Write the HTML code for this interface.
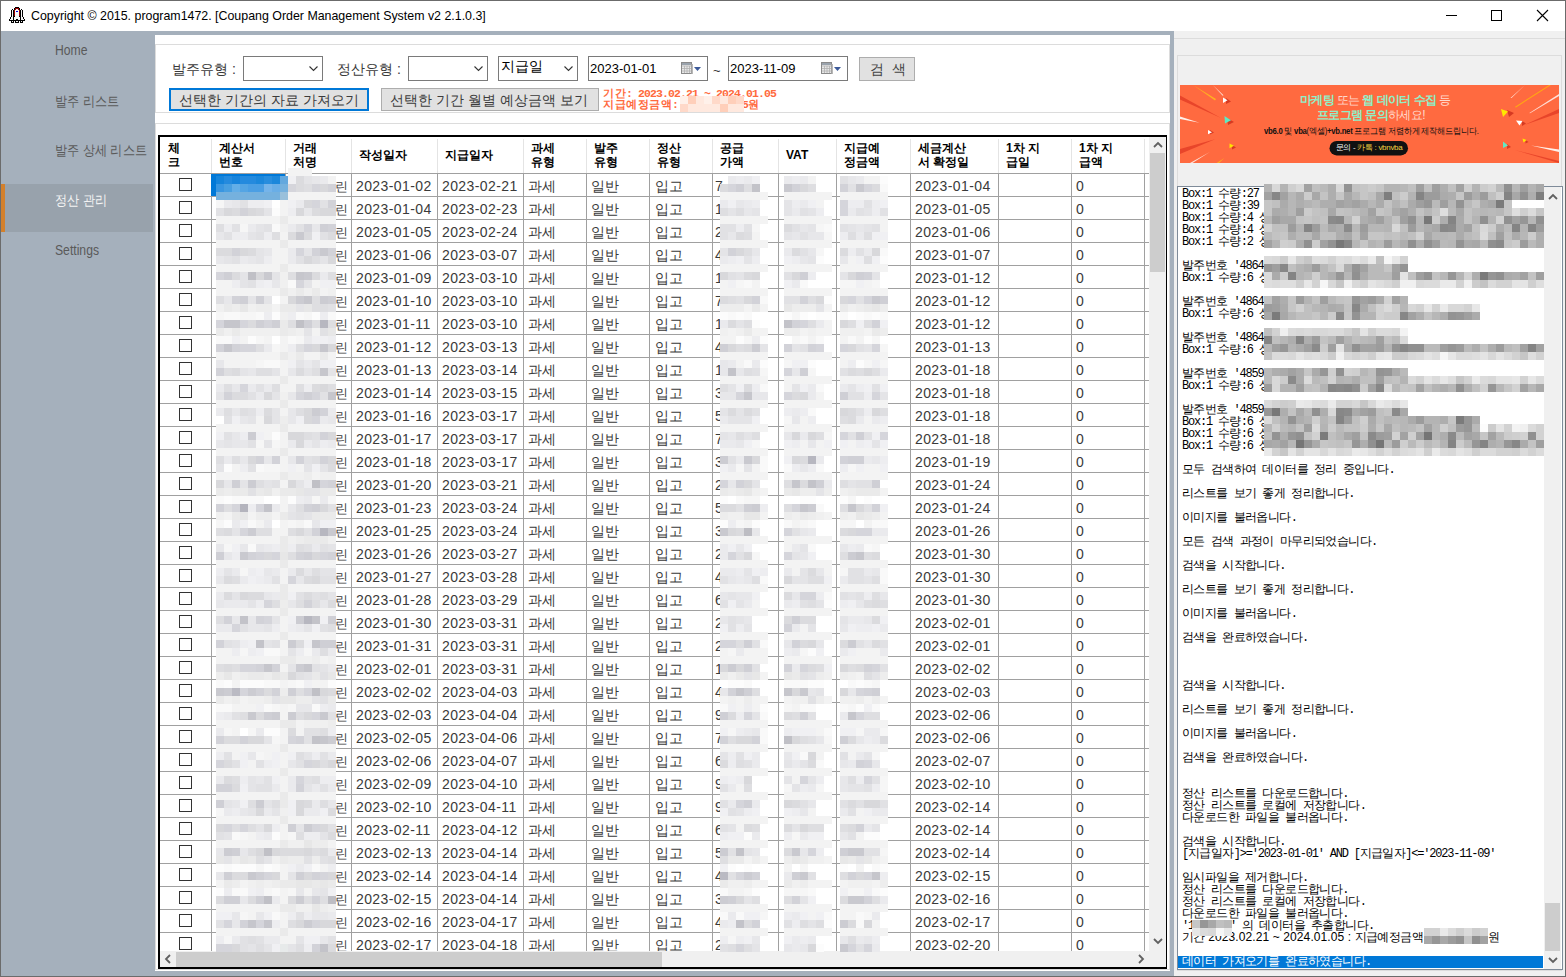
<!DOCTYPE html><html><head><meta charset="utf-8"><style>
*{margin:0;padding:0;box-sizing:border-box}
html,body{width:1566px;height:977px;overflow:hidden;background:#fff}
body{position:relative;font-family:"Liberation Sans",sans-serif;color:#000}
body div{position:absolute;white-space:nowrap}
.t{font-size:12.4px;line-height:14px}
.m{font-size:14px;line-height:16px;color:#5e5e5e;transform:scaleX(0.87);transform-origin:0 0}
.lb{font-size:14px;line-height:16px;color:#3a3a3a}
.hd{font-size:12px;line-height:14px;font-weight:bold;color:#000}
.c{font-size:14px;line-height:16px;color:#3a3a3a}
.g{font-family:"Liberation Mono",monospace;font-size:12px;line-height:12px;color:#000;letter-spacing:-1.2px}
.lg{font-family:"Liberation Sans",sans-serif;font-size:12px;line-height:12px;color:#000;letter-spacing:0.1px}
.lg b{font-weight:normal;letter-spacing:-0.6px}
.g b{font-weight:inherit;font-family:"Liberation Sans",sans-serif;font-size:12px;letter-spacing:-0.6px}
</style></head><body>
<div style="left:0px;top:0px;width:1566px;height:977px;background:#fff"></div>
<div style="left:1px;top:1px;width:1564px;height:30px;background:#fff"></div>
<div style="left:1px;top:31px;width:154px;height:945px;background:#a5b0bc"></div>
<div style="left:155px;top:31px;width:1019px;height:945px;background:#a5b0bc"></div>
<div style="left:155px;top:35px;width:1015px;height:936px;background:#fff"></div>
<div style="left:1174px;top:31px;width:391px;height:945px;background:#f0f0f0"></div>
<div style="left:0px;top:0px;width:1566px;height:1px;background:#6b6b6b"></div>
<div style="left:0px;top:0px;width:1px;height:977px;background:#6b6b6b"></div>
<div style="left:1565px;top:0px;width:1px;height:977px;background:#6b6b6b"></div>
<div style="left:0px;top:976px;width:1566px;height:1px;background:#6b6b6b"></div>
<svg style="position:absolute;left:9px;top:7px" width="16" height="16" shape-rendering="crispEdges"><rect x="6" y="0" width="1" height="1" fill="#000"/><rect x="7" y="0" width="1" height="1" fill="#000"/><rect x="8" y="0" width="1" height="1" fill="#000"/><rect x="9" y="0" width="1" height="1" fill="#000"/><rect x="5" y="1" width="1" height="1" fill="#000"/><rect x="6" y="1" width="1" height="1" fill="#9a0000"/><rect x="7" y="1" width="1" height="1" fill="#9a0000"/><rect x="8" y="1" width="1" height="1" fill="#9a0000"/><rect x="9" y="1" width="1" height="1" fill="#9a0000"/><rect x="10" y="1" width="1" height="1" fill="#000"/><rect x="3" y="2" width="1" height="1" fill="#000"/><rect x="5" y="2" width="1" height="1" fill="#000"/><rect x="6" y="2" width="1" height="1" fill="#9a0000"/><rect x="7" y="2" width="1" height="1" fill="#f4f4f4"/><rect x="8" y="2" width="1" height="1" fill="#f4f4f4"/><rect x="9" y="2" width="1" height="1" fill="#9a0000"/><rect x="10" y="2" width="1" height="1" fill="#000"/><rect x="12" y="2" width="1" height="1" fill="#000"/><rect x="2" y="3" width="1" height="1" fill="#000"/><rect x="3" y="3" width="1" height="1" fill="#f4f4f4"/><rect x="4" y="3" width="1" height="1" fill="#000"/><rect x="5" y="3" width="1" height="1" fill="#9a0000"/><rect x="6" y="3" width="1" height="1" fill="#f4f4f4"/><rect x="7" y="3" width="1" height="1" fill="#f4f4f4"/><rect x="8" y="3" width="1" height="1" fill="#f4f4f4"/><rect x="9" y="3" width="1" height="1" fill="#f4f4f4"/><rect x="10" y="3" width="1" height="1" fill="#9a0000"/><rect x="11" y="3" width="1" height="1" fill="#000"/><rect x="12" y="3" width="1" height="1" fill="#f4f4f4"/><rect x="13" y="3" width="1" height="1" fill="#000"/><rect x="2" y="4" width="1" height="1" fill="#000"/><rect x="3" y="4" width="1" height="1" fill="#f4f4f4"/><rect x="4" y="4" width="1" height="1" fill="#000"/><rect x="5" y="4" width="1" height="1" fill="#9a0000"/><rect x="6" y="4" width="1" height="1" fill="#f4f4f4"/><rect x="7" y="4" width="1" height="1" fill="#0000e0"/><rect x="8" y="4" width="1" height="1" fill="#0000e0"/><rect x="9" y="4" width="1" height="1" fill="#f4f4f4"/><rect x="10" y="4" width="1" height="1" fill="#9a0000"/><rect x="11" y="4" width="1" height="1" fill="#000"/><rect x="12" y="4" width="1" height="1" fill="#f4f4f4"/><rect x="13" y="4" width="1" height="1" fill="#000"/><rect x="2" y="5" width="1" height="1" fill="#000"/><rect x="3" y="5" width="1" height="1" fill="#f4f4f4"/><rect x="4" y="5" width="1" height="1" fill="#000"/><rect x="5" y="5" width="1" height="1" fill="#9a0000"/><rect x="6" y="5" width="1" height="1" fill="#f4f4f4"/><rect x="7" y="5" width="1" height="1" fill="#f4f4f4"/><rect x="8" y="5" width="1" height="1" fill="#f4f4f4"/><rect x="9" y="5" width="1" height="1" fill="#f4f4f4"/><rect x="10" y="5" width="1" height="1" fill="#9a0000"/><rect x="11" y="5" width="1" height="1" fill="#000"/><rect x="12" y="5" width="1" height="1" fill="#f4f4f4"/><rect x="13" y="5" width="1" height="1" fill="#000"/><rect x="2" y="6" width="1" height="1" fill="#000"/><rect x="3" y="6" width="1" height="1" fill="#f4f4f4"/><rect x="4" y="6" width="1" height="1" fill="#000"/><rect x="5" y="6" width="1" height="1" fill="#9a0000"/><rect x="6" y="6" width="1" height="1" fill="#f4f4f4"/><rect x="7" y="6" width="1" height="1" fill="#f4f4f4"/><rect x="8" y="6" width="1" height="1" fill="#f4f4f4"/><rect x="9" y="6" width="1" height="1" fill="#f4f4f4"/><rect x="10" y="6" width="1" height="1" fill="#9a0000"/><rect x="11" y="6" width="1" height="1" fill="#000"/><rect x="12" y="6" width="1" height="1" fill="#f4f4f4"/><rect x="13" y="6" width="1" height="1" fill="#000"/><rect x="2" y="7" width="1" height="1" fill="#000"/><rect x="3" y="7" width="1" height="1" fill="#f4f4f4"/><rect x="4" y="7" width="1" height="1" fill="#000"/><rect x="5" y="7" width="1" height="1" fill="#9a0000"/><rect x="6" y="7" width="1" height="1" fill="#f4f4f4"/><rect x="7" y="7" width="1" height="1" fill="#f4f4f4"/><rect x="8" y="7" width="1" height="1" fill="#f4f4f4"/><rect x="9" y="7" width="1" height="1" fill="#f4f4f4"/><rect x="10" y="7" width="1" height="1" fill="#9a0000"/><rect x="11" y="7" width="1" height="1" fill="#000"/><rect x="12" y="7" width="1" height="1" fill="#f4f4f4"/><rect x="13" y="7" width="1" height="1" fill="#000"/><rect x="2" y="8" width="1" height="1" fill="#000"/><rect x="3" y="8" width="1" height="1" fill="#f4f4f4"/><rect x="4" y="8" width="1" height="1" fill="#000"/><rect x="5" y="8" width="1" height="1" fill="#9a0000"/><rect x="6" y="8" width="1" height="1" fill="#f4f4f4"/><rect x="7" y="8" width="1" height="1" fill="#f4f4f4"/><rect x="8" y="8" width="1" height="1" fill="#f4f4f4"/><rect x="9" y="8" width="1" height="1" fill="#f4f4f4"/><rect x="10" y="8" width="1" height="1" fill="#9a0000"/><rect x="11" y="8" width="1" height="1" fill="#000"/><rect x="12" y="8" width="1" height="1" fill="#f4f4f4"/><rect x="13" y="8" width="1" height="1" fill="#000"/><rect x="2" y="9" width="1" height="1" fill="#000"/><rect x="3" y="9" width="1" height="1" fill="#f4f4f4"/><rect x="4" y="9" width="1" height="1" fill="#000"/><rect x="5" y="9" width="1" height="1" fill="#000"/><rect x="6" y="9" width="1" height="1" fill="#f4f4f4"/><rect x="7" y="9" width="1" height="1" fill="#f4f4f4"/><rect x="8" y="9" width="1" height="1" fill="#f4f4f4"/><rect x="9" y="9" width="1" height="1" fill="#f4f4f4"/><rect x="10" y="9" width="1" height="1" fill="#000"/><rect x="11" y="9" width="1" height="1" fill="#000"/><rect x="12" y="9" width="1" height="1" fill="#f4f4f4"/><rect x="13" y="9" width="1" height="1" fill="#000"/><rect x="1" y="10" width="1" height="1" fill="#000"/><rect x="2" y="10" width="1" height="1" fill="#f4f4f4"/><rect x="3" y="10" width="1" height="1" fill="#f4f4f4"/><rect x="4" y="10" width="1" height="1" fill="#000"/><rect x="5" y="10" width="1" height="1" fill="#f4f4f4"/><rect x="6" y="10" width="1" height="1" fill="#f4f4f4"/><rect x="7" y="10" width="1" height="1" fill="#f4f4f4"/><rect x="8" y="10" width="1" height="1" fill="#f4f4f4"/><rect x="9" y="10" width="1" height="1" fill="#f4f4f4"/><rect x="10" y="10" width="1" height="1" fill="#f4f4f4"/><rect x="11" y="10" width="1" height="1" fill="#000"/><rect x="12" y="10" width="1" height="1" fill="#f4f4f4"/><rect x="13" y="10" width="1" height="1" fill="#f4f4f4"/><rect x="14" y="10" width="1" height="1" fill="#000"/><rect x="1" y="11" width="1" height="1" fill="#000"/><rect x="2" y="11" width="1" height="1" fill="#f4f4f4"/><rect x="3" y="11" width="1" height="1" fill="#f4f4f4"/><rect x="4" y="11" width="1" height="1" fill="#000"/><rect x="5" y="11" width="1" height="1" fill="#f4f4f4"/><rect x="6" y="11" width="1" height="1" fill="#f4f4f4"/><rect x="7" y="11" width="1" height="1" fill="#f4f4f4"/><rect x="8" y="11" width="1" height="1" fill="#f4f4f4"/><rect x="9" y="11" width="1" height="1" fill="#f4f4f4"/><rect x="10" y="11" width="1" height="1" fill="#f4f4f4"/><rect x="11" y="11" width="1" height="1" fill="#000"/><rect x="12" y="11" width="1" height="1" fill="#f4f4f4"/><rect x="13" y="11" width="1" height="1" fill="#f4f4f4"/><rect x="14" y="11" width="1" height="1" fill="#000"/><rect x="0" y="12" width="1" height="1" fill="#000"/><rect x="1" y="12" width="1" height="1" fill="#f4f4f4"/><rect x="2" y="12" width="1" height="1" fill="#f4f4f4"/><rect x="3" y="12" width="1" height="1" fill="#f4f4f4"/><rect x="4" y="12" width="1" height="1" fill="#000"/><rect x="5" y="12" width="1" height="1" fill="#f4f4f4"/><rect x="6" y="12" width="1" height="1" fill="#f4f4f4"/><rect x="7" y="12" width="1" height="1" fill="#000"/><rect x="8" y="12" width="1" height="1" fill="#000"/><rect x="9" y="12" width="1" height="1" fill="#f4f4f4"/><rect x="10" y="12" width="1" height="1" fill="#f4f4f4"/><rect x="11" y="12" width="1" height="1" fill="#000"/><rect x="12" y="12" width="1" height="1" fill="#f4f4f4"/><rect x="13" y="12" width="1" height="1" fill="#f4f4f4"/><rect x="14" y="12" width="1" height="1" fill="#f4f4f4"/><rect x="15" y="12" width="1" height="1" fill="#000"/><rect x="0" y="13" width="1" height="1" fill="#000"/><rect x="1" y="13" width="1" height="1" fill="#000"/><rect x="2" y="13" width="1" height="1" fill="#000"/><rect x="3" y="13" width="1" height="1" fill="#000"/><rect x="4" y="13" width="1" height="1" fill="#000"/><rect x="5" y="13" width="1" height="1" fill="#000"/><rect x="6" y="13" width="1" height="1" fill="#000"/><rect x="7" y="13" width="1" height="1" fill="#000"/><rect x="8" y="13" width="1" height="1" fill="#000"/><rect x="9" y="13" width="1" height="1" fill="#000"/><rect x="10" y="13" width="1" height="1" fill="#000"/><rect x="11" y="13" width="1" height="1" fill="#000"/><rect x="12" y="13" width="1" height="1" fill="#000"/><rect x="13" y="13" width="1" height="1" fill="#000"/><rect x="14" y="13" width="1" height="1" fill="#000"/><rect x="15" y="13" width="1" height="1" fill="#000"/><rect x="2" y="14" width="1" height="1" fill="#000"/><rect x="3" y="14" width="1" height="1" fill="#f4f4f4"/><rect x="4" y="14" width="1" height="1" fill="#000"/><rect x="6" y="14" width="1" height="1" fill="#000"/><rect x="7" y="14" width="1" height="1" fill="#f4f4f4"/><rect x="8" y="14" width="1" height="1" fill="#f4f4f4"/><rect x="9" y="14" width="1" height="1" fill="#000"/><rect x="11" y="14" width="1" height="1" fill="#000"/><rect x="12" y="14" width="1" height="1" fill="#f4f4f4"/><rect x="13" y="14" width="1" height="1" fill="#000"/><rect x="2" y="15" width="1" height="1" fill="#000"/><rect x="3" y="15" width="1" height="1" fill="#000"/><rect x="4" y="15" width="1" height="1" fill="#000"/><rect x="6" y="15" width="1" height="1" fill="#000"/><rect x="7" y="15" width="1" height="1" fill="#000"/><rect x="8" y="15" width="1" height="1" fill="#000"/><rect x="9" y="15" width="1" height="1" fill="#000"/><rect x="11" y="15" width="1" height="1" fill="#000"/><rect x="12" y="15" width="1" height="1" fill="#000"/><rect x="13" y="15" width="1" height="1" fill="#000"/></svg>
<div class="t" style="left:31px;top:9px;color:#000">Copyright © 2015. program1472. [Coupang Order Management System v2 2.1.0.3]</div>
<div style="left:1446px;top:15px;width:11px;height:1px;background:#000"></div>
<div style="left:1491px;top:10px;width:11px;height:11px;border:1px solid #000"></div>
<svg style="position:absolute;left:1536px;top:9px" width="13" height="13" viewBox="0 0 13 13"><path d="M1 1L12 12M12 1L1 12" stroke="#000" stroke-width="1.1"/></svg>
<div style="left:1px;top:184px;width:152px;height:48px;background:#98a2ac"></div>
<div style="left:1px;top:184px;width:4px;height:48px;background:#d3802c"></div>
<div class="m" style="left:55px;top:42px;color:#5a5a5a">Home</div>
<div class="m" style="left:55px;top:93px;color:#5a5a5a">발주 리스트</div>
<div class="m" style="left:55px;top:142px;color:#5a5a5a">발주 상세 리스트</div>
<div class="m" style="left:55px;top:192px;color:#f4f4f4">정산 관리</div>
<div class="m" style="left:55px;top:242px;color:#5a5a5a">Settings</div>
<div style="left:155px;top:44px;width:1015px;height:1px;background:#dcdcdc"></div>
<div style="left:155px;top:44px;width:1px;height:68px;background:#dcdcdc"></div>
<div style="left:1169px;top:44px;width:1px;height:68px;background:#dcdcdc"></div>
<div style="left:155px;top:112px;width:1015px;height:1px;background:#dcdcdc"></div>
<div style="left:155px;top:123px;width:1015px;height:1px;background:#dcdcdc"></div>
<div style="left:155px;top:123px;width:1px;height:847px;background:#dcdcdc"></div>
<div style="left:1169px;top:123px;width:1px;height:847px;background:#dcdcdc"></div>
<div style="left:155px;top:969px;width:1015px;height:1px;background:#dcdcdc"></div>
<div class="lb" style="left:172px;top:61px;">발주유형 :</div>
<div class="lb" style="left:337px;top:61px;">정산유형 :</div>
<div style="left:243px;top:56px;width:80px;height:25px;border:1px solid #7a7a7a;background:#fff"></div>
<svg style="position:absolute;left:309px;top:66px" width="9" height="6" viewBox="0 0 9 6"><path d="M0.5 0.5L4.5 4.5L8.5 0.5" fill="none" stroke="#333" stroke-width="1.1"/></svg>
<div style="left:408px;top:56px;width:80px;height:25px;border:1px solid #7a7a7a;background:#fff"></div>
<svg style="position:absolute;left:474px;top:66px" width="9" height="6" viewBox="0 0 9 6"><path d="M0.5 0.5L4.5 4.5L8.5 0.5" fill="none" stroke="#333" stroke-width="1.1"/></svg>
<div style="left:498px;top:56px;width:80px;height:25px;border:1px solid #7a7a7a;background:#fff"></div>
<svg style="position:absolute;left:564px;top:66px" width="9" height="6" viewBox="0 0 9 6"><path d="M0.5 0.5L4.5 4.5L8.5 0.5" fill="none" stroke="#333" stroke-width="1.1"/></svg>
<div class="lb" style="left:501px;top:58px;color:#000">지급일</div>
<div style="left:588px;top:56px;width:120px;height:25px;border:1px solid #7a7a7a;background:#fff"></div>
<div class="lb" style="left:590px;top:61px;color:#000;font-size:13px">2023-01-01</div>
<svg style="position:absolute;left:681px;top:62px" width="21" height="13" viewBox="0 0 21 13">
<rect x="0.5" y="0.5" width="10" height="11" fill="#e8e8e8" stroke="#8a8a8a"/>
<path d="M1 4h9M1 6.5h9M1 9h9M3.5 4v7M6 4v7M8.5 4v7" stroke="#b0b0b0" stroke-width="0.8"/>
<rect x="1" y="1" width="9" height="2" fill="#9aa3ad"/>
<rect x="10.5" y="2" width="1.5" height="10" fill="#b8b8b8"/>
<path d="M13 5h7l-3.5 4z" fill="#3b5998"/></svg>
<div style="left:728px;top:56px;width:120px;height:25px;border:1px solid #7a7a7a;background:#fff"></div>
<div class="lb" style="left:730px;top:61px;color:#000;font-size:13px">2023-11-09</div>
<svg style="position:absolute;left:821px;top:62px" width="21" height="13" viewBox="0 0 21 13">
<rect x="0.5" y="0.5" width="10" height="11" fill="#e8e8e8" stroke="#8a8a8a"/>
<path d="M1 4h9M1 6.5h9M1 9h9M3.5 4v7M6 4v7M8.5 4v7" stroke="#b0b0b0" stroke-width="0.8"/>
<rect x="1" y="1" width="9" height="2" fill="#9aa3ad"/>
<rect x="10.5" y="2" width="1.5" height="10" fill="#b8b8b8"/>
<path d="M13 5h7l-3.5 4z" fill="#3b5998"/></svg>
<div class="lb" style="left:713px;top:63px;color:#333;font-size:13px">~</div>
<div style="left:859px;top:57px;width:56px;height:24px;border:1px solid #adadad;background:#e1e1e1"></div>
<div class="lb" style="left:870px;top:61px;color:#444">검&nbsp;&nbsp;색</div>
<div style="left:169px;top:88px;width:200px;height:23px;border:2px solid #0078d7;background:#e1e1e1"></div>
<div class="lb" style="left:179px;top:92px;color:#3c3c3c">선택한 기간의 자료 가져오기</div>
<div style="left:381px;top:88px;width:218px;height:23px;border:1px solid #adadad;background:#e1e1e1"></div>
<div class="lb" style="left:390px;top:92px;color:#3c3c3c">선택한 기간 월별 예상금액 보기</div>
<div class="g" style="left:603px;top:88px;color:#ff6a3d;font-weight:bold;line-height:10px;font-size:11.5px;letter-spacing:-0.9px"><b style="font-size:11px;letter-spacing:0.5px">기간</b>: 2023.02.21 ~ 2024.01.05</div>
<div class="g" style="left:603px;top:99px;color:#ff6a3d;font-weight:bold;line-height:10px;font-size:11.5px;letter-spacing:-0.9px"><b style="font-size:11px;letter-spacing:0.5px">지급예정금액</b>: <span style="display:inline-block;width:58px"></span>5<b style="font-size:11px">원</b></div>
<div style="left:680px;top:96px;width:8px;height:8px;background:#fff1ea"></div>
<div style="left:680px;top:104px;width:8px;height:8px;background:#ffd9c9"></div>
<div style="left:688px;top:96px;width:8px;height:8px;background:#ffcfba"></div>
<div style="left:688px;top:104px;width:8px;height:8px;background:#ffe9df"></div>
<div style="left:696px;top:96px;width:8px;height:8px;background:#ffe9df"></div>
<div style="left:696px;top:104px;width:8px;height:8px;background:#ffe9df"></div>
<div style="left:704px;top:96px;width:8px;height:8px;background:#fff1ea"></div>
<div style="left:704px;top:104px;width:8px;height:8px;background:#ffe9df"></div>
<div style="left:712px;top:96px;width:8px;height:8px;background:#ffd9c9"></div>
<div style="left:712px;top:104px;width:8px;height:8px;background:#ffe9df"></div>
<div style="left:720px;top:96px;width:8px;height:8px;background:#ffe9df"></div>
<div style="left:720px;top:104px;width:8px;height:8px;background:#ffcfba"></div>
<div style="left:728px;top:96px;width:8px;height:8px;background:#ffcfba"></div>
<div style="left:728px;top:104px;width:8px;height:8px;background:#ffe9df"></div>
<div style="left:736px;top:96px;width:8px;height:8px;background:#ffd9c9"></div>
<div style="left:736px;top:104px;width:8px;height:8px;background:#ffe9df"></div>
<div style="left:211px;top:139px;width:1px;height:36px;background:#e4e4e4"></div>
<div style="left:285px;top:139px;width:1px;height:36px;background:#e4e4e4"></div>
<div style="left:351px;top:139px;width:1px;height:36px;background:#e4e4e4"></div>
<div style="left:437px;top:139px;width:1px;height:36px;background:#e4e4e4"></div>
<div style="left:523px;top:139px;width:1px;height:36px;background:#e4e4e4"></div>
<div style="left:586px;top:139px;width:1px;height:36px;background:#e4e4e4"></div>
<div style="left:649px;top:139px;width:1px;height:36px;background:#e4e4e4"></div>
<div style="left:712px;top:139px;width:1px;height:36px;background:#e4e4e4"></div>
<div style="left:778px;top:139px;width:1px;height:36px;background:#e4e4e4"></div>
<div style="left:836px;top:139px;width:1px;height:36px;background:#e4e4e4"></div>
<div style="left:910px;top:139px;width:1px;height:36px;background:#e4e4e4"></div>
<div style="left:998px;top:139px;width:1px;height:36px;background:#e4e4e4"></div>
<div style="left:1071px;top:139px;width:1px;height:36px;background:#e4e4e4"></div>
<div style="left:1144px;top:139px;width:1px;height:36px;background:#e4e4e4"></div>
<div style="left:160px;top:173px;width:989px;height:1px;background:#a0a0a0"></div>
<div class="hd" style="left:168px;top:141px;">체<br>크</div>
<div class="hd" style="left:219px;top:141px;">계산서<br>번호</div>
<div class="hd" style="left:293px;top:141px;">거래<br>처명</div>
<div class="hd" style="left:359px;top:148px;">작성일자</div>
<div class="hd" style="left:445px;top:148px;">지급일자</div>
<div class="hd" style="left:531px;top:141px;">과세<br>유형</div>
<div class="hd" style="left:594px;top:141px;">발주<br>유형</div>
<div class="hd" style="left:657px;top:141px;">정산<br>유형</div>
<div class="hd" style="left:720px;top:141px;">공급<br>가액</div>
<div class="hd" style="left:786px;top:148px;">VAT</div>
<div class="hd" style="left:844px;top:141px;">지급예<br>정금액</div>
<div class="hd" style="left:918px;top:141px;">세금계산<br>서 확정일</div>
<div class="hd" style="left:1006px;top:141px;">1차 지<br>급일</div>
<div class="hd" style="left:1079px;top:141px;">1차 지<br>급액</div>
<div style="left:160px;top:174px;width:989px;height:777px;overflow:hidden">
<div style="left:0;top:22px;width:989px;height:1px;background:#a0a0a0"></div>
<div style="left:19px;top:4px;width:13px;height:13px;border:1px solid #333;background:#fff"></div>
<div class="c" style="left:196px;top:4px;letter-spacing:0.4px">2023-01-02</div>
<div class="c" style="left:282px;top:4px;letter-spacing:0.4px">2023-02-21</div>
<div class="c" style="left:755px;top:4px;letter-spacing:0.4px">2023-01-04</div>
<div class="c" style="left:175px;top:5px;font-size:13px">린</div>
<div class="c" style="left:368px;top:4px">과세</div>
<div class="c" style="left:431px;top:4px">일반</div>
<div class="c" style="left:495px;top:4px">입고</div>
<div class="c" style="left:916px;top:4px">0</div>
<div class="c" style="left:555px;top:4px">7</div>
<div style="left:0;top:45px;width:989px;height:1px;background:#a0a0a0"></div>
<div style="left:19px;top:27px;width:13px;height:13px;border:1px solid #333;background:#fff"></div>
<div class="c" style="left:196px;top:27px;letter-spacing:0.4px">2023-01-04</div>
<div class="c" style="left:282px;top:27px;letter-spacing:0.4px">2023-02-23</div>
<div class="c" style="left:755px;top:27px;letter-spacing:0.4px">2023-01-05</div>
<div class="c" style="left:175px;top:28px;font-size:13px">린</div>
<div class="c" style="left:368px;top:27px">과세</div>
<div class="c" style="left:431px;top:27px">일반</div>
<div class="c" style="left:495px;top:27px">입고</div>
<div class="c" style="left:916px;top:27px">0</div>
<div class="c" style="left:555px;top:27px">1</div>
<div style="left:0;top:68px;width:989px;height:1px;background:#a0a0a0"></div>
<div style="left:19px;top:50px;width:13px;height:13px;border:1px solid #333;background:#fff"></div>
<div class="c" style="left:196px;top:50px;letter-spacing:0.4px">2023-01-05</div>
<div class="c" style="left:282px;top:50px;letter-spacing:0.4px">2023-02-24</div>
<div class="c" style="left:755px;top:50px;letter-spacing:0.4px">2023-01-06</div>
<div class="c" style="left:175px;top:51px;font-size:13px">린</div>
<div class="c" style="left:368px;top:50px">과세</div>
<div class="c" style="left:431px;top:50px">일반</div>
<div class="c" style="left:495px;top:50px">입고</div>
<div class="c" style="left:916px;top:50px">0</div>
<div class="c" style="left:555px;top:50px">2</div>
<div style="left:0;top:91px;width:989px;height:1px;background:#a0a0a0"></div>
<div style="left:19px;top:73px;width:13px;height:13px;border:1px solid #333;background:#fff"></div>
<div class="c" style="left:196px;top:73px;letter-spacing:0.4px">2023-01-06</div>
<div class="c" style="left:282px;top:73px;letter-spacing:0.4px">2023-03-07</div>
<div class="c" style="left:755px;top:73px;letter-spacing:0.4px">2023-01-07</div>
<div class="c" style="left:175px;top:74px;font-size:13px">린</div>
<div class="c" style="left:368px;top:73px">과세</div>
<div class="c" style="left:431px;top:73px">일반</div>
<div class="c" style="left:495px;top:73px">입고</div>
<div class="c" style="left:916px;top:73px">0</div>
<div class="c" style="left:555px;top:73px">4</div>
<div style="left:0;top:114px;width:989px;height:1px;background:#a0a0a0"></div>
<div style="left:19px;top:96px;width:13px;height:13px;border:1px solid #333;background:#fff"></div>
<div class="c" style="left:196px;top:96px;letter-spacing:0.4px">2023-01-09</div>
<div class="c" style="left:282px;top:96px;letter-spacing:0.4px">2023-03-10</div>
<div class="c" style="left:755px;top:96px;letter-spacing:0.4px">2023-01-12</div>
<div class="c" style="left:175px;top:97px;font-size:13px">린</div>
<div class="c" style="left:368px;top:96px">과세</div>
<div class="c" style="left:431px;top:96px">일반</div>
<div class="c" style="left:495px;top:96px">입고</div>
<div class="c" style="left:916px;top:96px">0</div>
<div class="c" style="left:555px;top:96px">1</div>
<div style="left:0;top:137px;width:989px;height:1px;background:#a0a0a0"></div>
<div style="left:19px;top:119px;width:13px;height:13px;border:1px solid #333;background:#fff"></div>
<div class="c" style="left:196px;top:119px;letter-spacing:0.4px">2023-01-10</div>
<div class="c" style="left:282px;top:119px;letter-spacing:0.4px">2023-03-10</div>
<div class="c" style="left:755px;top:119px;letter-spacing:0.4px">2023-01-12</div>
<div class="c" style="left:175px;top:120px;font-size:13px">린</div>
<div class="c" style="left:368px;top:119px">과세</div>
<div class="c" style="left:431px;top:119px">일반</div>
<div class="c" style="left:495px;top:119px">입고</div>
<div class="c" style="left:916px;top:119px">0</div>
<div class="c" style="left:555px;top:119px">7</div>
<div style="left:0;top:160px;width:989px;height:1px;background:#a0a0a0"></div>
<div style="left:19px;top:142px;width:13px;height:13px;border:1px solid #333;background:#fff"></div>
<div class="c" style="left:196px;top:142px;letter-spacing:0.4px">2023-01-11</div>
<div class="c" style="left:282px;top:142px;letter-spacing:0.4px">2023-03-10</div>
<div class="c" style="left:755px;top:142px;letter-spacing:0.4px">2023-01-12</div>
<div class="c" style="left:175px;top:143px;font-size:13px">린</div>
<div class="c" style="left:368px;top:142px">과세</div>
<div class="c" style="left:431px;top:142px">일반</div>
<div class="c" style="left:495px;top:142px">입고</div>
<div class="c" style="left:916px;top:142px">0</div>
<div class="c" style="left:555px;top:142px">1</div>
<div style="left:0;top:183px;width:989px;height:1px;background:#a0a0a0"></div>
<div style="left:19px;top:165px;width:13px;height:13px;border:1px solid #333;background:#fff"></div>
<div class="c" style="left:196px;top:165px;letter-spacing:0.4px">2023-01-12</div>
<div class="c" style="left:282px;top:165px;letter-spacing:0.4px">2023-03-13</div>
<div class="c" style="left:755px;top:165px;letter-spacing:0.4px">2023-01-13</div>
<div class="c" style="left:175px;top:166px;font-size:13px">린</div>
<div class="c" style="left:368px;top:165px">과세</div>
<div class="c" style="left:431px;top:165px">일반</div>
<div class="c" style="left:495px;top:165px">입고</div>
<div class="c" style="left:916px;top:165px">0</div>
<div class="c" style="left:555px;top:165px">4</div>
<div style="left:0;top:206px;width:989px;height:1px;background:#a0a0a0"></div>
<div style="left:19px;top:188px;width:13px;height:13px;border:1px solid #333;background:#fff"></div>
<div class="c" style="left:196px;top:188px;letter-spacing:0.4px">2023-01-13</div>
<div class="c" style="left:282px;top:188px;letter-spacing:0.4px">2023-03-14</div>
<div class="c" style="left:755px;top:188px;letter-spacing:0.4px">2023-01-18</div>
<div class="c" style="left:175px;top:189px;font-size:13px">린</div>
<div class="c" style="left:368px;top:188px">과세</div>
<div class="c" style="left:431px;top:188px">일반</div>
<div class="c" style="left:495px;top:188px">입고</div>
<div class="c" style="left:916px;top:188px">0</div>
<div class="c" style="left:555px;top:188px">1</div>
<div style="left:0;top:229px;width:989px;height:1px;background:#a0a0a0"></div>
<div style="left:19px;top:211px;width:13px;height:13px;border:1px solid #333;background:#fff"></div>
<div class="c" style="left:196px;top:211px;letter-spacing:0.4px">2023-01-14</div>
<div class="c" style="left:282px;top:211px;letter-spacing:0.4px">2023-03-15</div>
<div class="c" style="left:755px;top:211px;letter-spacing:0.4px">2023-01-18</div>
<div class="c" style="left:175px;top:212px;font-size:13px">린</div>
<div class="c" style="left:368px;top:211px">과세</div>
<div class="c" style="left:431px;top:211px">일반</div>
<div class="c" style="left:495px;top:211px">입고</div>
<div class="c" style="left:916px;top:211px">0</div>
<div class="c" style="left:555px;top:211px">3</div>
<div style="left:0;top:252px;width:989px;height:1px;background:#a0a0a0"></div>
<div style="left:19px;top:234px;width:13px;height:13px;border:1px solid #333;background:#fff"></div>
<div class="c" style="left:196px;top:234px;letter-spacing:0.4px">2023-01-16</div>
<div class="c" style="left:282px;top:234px;letter-spacing:0.4px">2023-03-17</div>
<div class="c" style="left:755px;top:234px;letter-spacing:0.4px">2023-01-18</div>
<div class="c" style="left:175px;top:235px;font-size:13px">린</div>
<div class="c" style="left:368px;top:234px">과세</div>
<div class="c" style="left:431px;top:234px">일반</div>
<div class="c" style="left:495px;top:234px">입고</div>
<div class="c" style="left:916px;top:234px">0</div>
<div class="c" style="left:555px;top:234px">5</div>
<div style="left:0;top:275px;width:989px;height:1px;background:#a0a0a0"></div>
<div style="left:19px;top:257px;width:13px;height:13px;border:1px solid #333;background:#fff"></div>
<div class="c" style="left:196px;top:257px;letter-spacing:0.4px">2023-01-17</div>
<div class="c" style="left:282px;top:257px;letter-spacing:0.4px">2023-03-17</div>
<div class="c" style="left:755px;top:257px;letter-spacing:0.4px">2023-01-18</div>
<div class="c" style="left:175px;top:258px;font-size:13px">린</div>
<div class="c" style="left:368px;top:257px">과세</div>
<div class="c" style="left:431px;top:257px">일반</div>
<div class="c" style="left:495px;top:257px">입고</div>
<div class="c" style="left:916px;top:257px">0</div>
<div class="c" style="left:555px;top:257px">7</div>
<div style="left:0;top:298px;width:989px;height:1px;background:#a0a0a0"></div>
<div style="left:19px;top:280px;width:13px;height:13px;border:1px solid #333;background:#fff"></div>
<div class="c" style="left:196px;top:280px;letter-spacing:0.4px">2023-01-18</div>
<div class="c" style="left:282px;top:280px;letter-spacing:0.4px">2023-03-17</div>
<div class="c" style="left:755px;top:280px;letter-spacing:0.4px">2023-01-19</div>
<div class="c" style="left:175px;top:281px;font-size:13px">린</div>
<div class="c" style="left:368px;top:280px">과세</div>
<div class="c" style="left:431px;top:280px">일반</div>
<div class="c" style="left:495px;top:280px">입고</div>
<div class="c" style="left:916px;top:280px">0</div>
<div class="c" style="left:555px;top:280px">3</div>
<div style="left:0;top:321px;width:989px;height:1px;background:#a0a0a0"></div>
<div style="left:19px;top:303px;width:13px;height:13px;border:1px solid #333;background:#fff"></div>
<div class="c" style="left:196px;top:303px;letter-spacing:0.4px">2023-01-20</div>
<div class="c" style="left:282px;top:303px;letter-spacing:0.4px">2023-03-21</div>
<div class="c" style="left:755px;top:303px;letter-spacing:0.4px">2023-01-24</div>
<div class="c" style="left:175px;top:304px;font-size:13px">린</div>
<div class="c" style="left:368px;top:303px">과세</div>
<div class="c" style="left:431px;top:303px">일반</div>
<div class="c" style="left:495px;top:303px">입고</div>
<div class="c" style="left:916px;top:303px">0</div>
<div class="c" style="left:555px;top:303px">2</div>
<div style="left:0;top:344px;width:989px;height:1px;background:#a0a0a0"></div>
<div style="left:19px;top:326px;width:13px;height:13px;border:1px solid #333;background:#fff"></div>
<div class="c" style="left:196px;top:326px;letter-spacing:0.4px">2023-01-23</div>
<div class="c" style="left:282px;top:326px;letter-spacing:0.4px">2023-03-24</div>
<div class="c" style="left:755px;top:326px;letter-spacing:0.4px">2023-01-24</div>
<div class="c" style="left:175px;top:327px;font-size:13px">린</div>
<div class="c" style="left:368px;top:326px">과세</div>
<div class="c" style="left:431px;top:326px">일반</div>
<div class="c" style="left:495px;top:326px">입고</div>
<div class="c" style="left:916px;top:326px">0</div>
<div class="c" style="left:555px;top:326px">5</div>
<div style="left:0;top:367px;width:989px;height:1px;background:#a0a0a0"></div>
<div style="left:19px;top:349px;width:13px;height:13px;border:1px solid #333;background:#fff"></div>
<div class="c" style="left:196px;top:349px;letter-spacing:0.4px">2023-01-25</div>
<div class="c" style="left:282px;top:349px;letter-spacing:0.4px">2023-03-24</div>
<div class="c" style="left:755px;top:349px;letter-spacing:0.4px">2023-01-26</div>
<div class="c" style="left:175px;top:350px;font-size:13px">린</div>
<div class="c" style="left:368px;top:349px">과세</div>
<div class="c" style="left:431px;top:349px">일반</div>
<div class="c" style="left:495px;top:349px">입고</div>
<div class="c" style="left:916px;top:349px">0</div>
<div class="c" style="left:555px;top:349px">3</div>
<div style="left:0;top:390px;width:989px;height:1px;background:#a0a0a0"></div>
<div style="left:19px;top:372px;width:13px;height:13px;border:1px solid #333;background:#fff"></div>
<div class="c" style="left:196px;top:372px;letter-spacing:0.4px">2023-01-26</div>
<div class="c" style="left:282px;top:372px;letter-spacing:0.4px">2023-03-27</div>
<div class="c" style="left:755px;top:372px;letter-spacing:0.4px">2023-01-30</div>
<div class="c" style="left:175px;top:373px;font-size:13px">린</div>
<div class="c" style="left:368px;top:372px">과세</div>
<div class="c" style="left:431px;top:372px">일반</div>
<div class="c" style="left:495px;top:372px">입고</div>
<div class="c" style="left:916px;top:372px">0</div>
<div class="c" style="left:555px;top:372px">2</div>
<div style="left:0;top:413px;width:989px;height:1px;background:#a0a0a0"></div>
<div style="left:19px;top:395px;width:13px;height:13px;border:1px solid #333;background:#fff"></div>
<div class="c" style="left:196px;top:395px;letter-spacing:0.4px">2023-01-27</div>
<div class="c" style="left:282px;top:395px;letter-spacing:0.4px">2023-03-28</div>
<div class="c" style="left:755px;top:395px;letter-spacing:0.4px">2023-01-30</div>
<div class="c" style="left:175px;top:396px;font-size:13px">린</div>
<div class="c" style="left:368px;top:395px">과세</div>
<div class="c" style="left:431px;top:395px">일반</div>
<div class="c" style="left:495px;top:395px">입고</div>
<div class="c" style="left:916px;top:395px">0</div>
<div class="c" style="left:555px;top:395px">4</div>
<div style="left:0;top:436px;width:989px;height:1px;background:#a0a0a0"></div>
<div style="left:19px;top:418px;width:13px;height:13px;border:1px solid #333;background:#fff"></div>
<div class="c" style="left:196px;top:418px;letter-spacing:0.4px">2023-01-28</div>
<div class="c" style="left:282px;top:418px;letter-spacing:0.4px">2023-03-29</div>
<div class="c" style="left:755px;top:418px;letter-spacing:0.4px">2023-01-30</div>
<div class="c" style="left:175px;top:419px;font-size:13px">린</div>
<div class="c" style="left:368px;top:418px">과세</div>
<div class="c" style="left:431px;top:418px">일반</div>
<div class="c" style="left:495px;top:418px">입고</div>
<div class="c" style="left:916px;top:418px">0</div>
<div class="c" style="left:555px;top:418px">6</div>
<div style="left:0;top:459px;width:989px;height:1px;background:#a0a0a0"></div>
<div style="left:19px;top:441px;width:13px;height:13px;border:1px solid #333;background:#fff"></div>
<div class="c" style="left:196px;top:441px;letter-spacing:0.4px">2023-01-30</div>
<div class="c" style="left:282px;top:441px;letter-spacing:0.4px">2023-03-31</div>
<div class="c" style="left:755px;top:441px;letter-spacing:0.4px">2023-02-01</div>
<div class="c" style="left:175px;top:442px;font-size:13px">린</div>
<div class="c" style="left:368px;top:441px">과세</div>
<div class="c" style="left:431px;top:441px">일반</div>
<div class="c" style="left:495px;top:441px">입고</div>
<div class="c" style="left:916px;top:441px">0</div>
<div class="c" style="left:555px;top:441px">2</div>
<div style="left:0;top:482px;width:989px;height:1px;background:#a0a0a0"></div>
<div style="left:19px;top:464px;width:13px;height:13px;border:1px solid #333;background:#fff"></div>
<div class="c" style="left:196px;top:464px;letter-spacing:0.4px">2023-01-31</div>
<div class="c" style="left:282px;top:464px;letter-spacing:0.4px">2023-03-31</div>
<div class="c" style="left:755px;top:464px;letter-spacing:0.4px">2023-02-01</div>
<div class="c" style="left:175px;top:465px;font-size:13px">린</div>
<div class="c" style="left:368px;top:464px">과세</div>
<div class="c" style="left:431px;top:464px">일반</div>
<div class="c" style="left:495px;top:464px">입고</div>
<div class="c" style="left:916px;top:464px">0</div>
<div class="c" style="left:555px;top:464px">2</div>
<div style="left:0;top:505px;width:989px;height:1px;background:#a0a0a0"></div>
<div style="left:19px;top:487px;width:13px;height:13px;border:1px solid #333;background:#fff"></div>
<div class="c" style="left:196px;top:487px;letter-spacing:0.4px">2023-02-01</div>
<div class="c" style="left:282px;top:487px;letter-spacing:0.4px">2023-03-31</div>
<div class="c" style="left:755px;top:487px;letter-spacing:0.4px">2023-02-02</div>
<div class="c" style="left:175px;top:488px;font-size:13px">린</div>
<div class="c" style="left:368px;top:487px">과세</div>
<div class="c" style="left:431px;top:487px">일반</div>
<div class="c" style="left:495px;top:487px">입고</div>
<div class="c" style="left:916px;top:487px">0</div>
<div class="c" style="left:555px;top:487px">1</div>
<div style="left:0;top:528px;width:989px;height:1px;background:#a0a0a0"></div>
<div style="left:19px;top:510px;width:13px;height:13px;border:1px solid #333;background:#fff"></div>
<div class="c" style="left:196px;top:510px;letter-spacing:0.4px">2023-02-02</div>
<div class="c" style="left:282px;top:510px;letter-spacing:0.4px">2023-04-03</div>
<div class="c" style="left:755px;top:510px;letter-spacing:0.4px">2023-02-03</div>
<div class="c" style="left:175px;top:511px;font-size:13px">린</div>
<div class="c" style="left:368px;top:510px">과세</div>
<div class="c" style="left:431px;top:510px">일반</div>
<div class="c" style="left:495px;top:510px">입고</div>
<div class="c" style="left:916px;top:510px">0</div>
<div class="c" style="left:555px;top:510px">4</div>
<div style="left:0;top:551px;width:989px;height:1px;background:#a0a0a0"></div>
<div style="left:19px;top:533px;width:13px;height:13px;border:1px solid #333;background:#fff"></div>
<div class="c" style="left:196px;top:533px;letter-spacing:0.4px">2023-02-03</div>
<div class="c" style="left:282px;top:533px;letter-spacing:0.4px">2023-04-04</div>
<div class="c" style="left:755px;top:533px;letter-spacing:0.4px">2023-02-06</div>
<div class="c" style="left:175px;top:534px;font-size:13px">린</div>
<div class="c" style="left:368px;top:533px">과세</div>
<div class="c" style="left:431px;top:533px">일반</div>
<div class="c" style="left:495px;top:533px">입고</div>
<div class="c" style="left:916px;top:533px">0</div>
<div class="c" style="left:555px;top:533px">9</div>
<div style="left:0;top:574px;width:989px;height:1px;background:#a0a0a0"></div>
<div style="left:19px;top:556px;width:13px;height:13px;border:1px solid #333;background:#fff"></div>
<div class="c" style="left:196px;top:556px;letter-spacing:0.4px">2023-02-05</div>
<div class="c" style="left:282px;top:556px;letter-spacing:0.4px">2023-04-06</div>
<div class="c" style="left:755px;top:556px;letter-spacing:0.4px">2023-02-06</div>
<div class="c" style="left:175px;top:557px;font-size:13px">린</div>
<div class="c" style="left:368px;top:556px">과세</div>
<div class="c" style="left:431px;top:556px">일반</div>
<div class="c" style="left:495px;top:556px">입고</div>
<div class="c" style="left:916px;top:556px">0</div>
<div class="c" style="left:555px;top:556px">7</div>
<div style="left:0;top:597px;width:989px;height:1px;background:#a0a0a0"></div>
<div style="left:19px;top:579px;width:13px;height:13px;border:1px solid #333;background:#fff"></div>
<div class="c" style="left:196px;top:579px;letter-spacing:0.4px">2023-02-06</div>
<div class="c" style="left:282px;top:579px;letter-spacing:0.4px">2023-04-07</div>
<div class="c" style="left:755px;top:579px;letter-spacing:0.4px">2023-02-07</div>
<div class="c" style="left:175px;top:580px;font-size:13px">린</div>
<div class="c" style="left:368px;top:579px">과세</div>
<div class="c" style="left:431px;top:579px">일반</div>
<div class="c" style="left:495px;top:579px">입고</div>
<div class="c" style="left:916px;top:579px">0</div>
<div class="c" style="left:555px;top:579px">6</div>
<div style="left:0;top:620px;width:989px;height:1px;background:#a0a0a0"></div>
<div style="left:19px;top:602px;width:13px;height:13px;border:1px solid #333;background:#fff"></div>
<div class="c" style="left:196px;top:602px;letter-spacing:0.4px">2023-02-09</div>
<div class="c" style="left:282px;top:602px;letter-spacing:0.4px">2023-04-10</div>
<div class="c" style="left:755px;top:602px;letter-spacing:0.4px">2023-02-10</div>
<div class="c" style="left:175px;top:603px;font-size:13px">린</div>
<div class="c" style="left:368px;top:602px">과세</div>
<div class="c" style="left:431px;top:602px">일반</div>
<div class="c" style="left:495px;top:602px">입고</div>
<div class="c" style="left:916px;top:602px">0</div>
<div class="c" style="left:555px;top:602px">9</div>
<div style="left:0;top:643px;width:989px;height:1px;background:#a0a0a0"></div>
<div style="left:19px;top:625px;width:13px;height:13px;border:1px solid #333;background:#fff"></div>
<div class="c" style="left:196px;top:625px;letter-spacing:0.4px">2023-02-10</div>
<div class="c" style="left:282px;top:625px;letter-spacing:0.4px">2023-04-11</div>
<div class="c" style="left:755px;top:625px;letter-spacing:0.4px">2023-02-14</div>
<div class="c" style="left:175px;top:626px;font-size:13px">린</div>
<div class="c" style="left:368px;top:625px">과세</div>
<div class="c" style="left:431px;top:625px">일반</div>
<div class="c" style="left:495px;top:625px">입고</div>
<div class="c" style="left:916px;top:625px">0</div>
<div class="c" style="left:555px;top:625px">9</div>
<div style="left:0;top:666px;width:989px;height:1px;background:#a0a0a0"></div>
<div style="left:19px;top:648px;width:13px;height:13px;border:1px solid #333;background:#fff"></div>
<div class="c" style="left:196px;top:648px;letter-spacing:0.4px">2023-02-11</div>
<div class="c" style="left:282px;top:648px;letter-spacing:0.4px">2023-04-12</div>
<div class="c" style="left:755px;top:648px;letter-spacing:0.4px">2023-02-14</div>
<div class="c" style="left:175px;top:649px;font-size:13px">린</div>
<div class="c" style="left:368px;top:648px">과세</div>
<div class="c" style="left:431px;top:648px">일반</div>
<div class="c" style="left:495px;top:648px">입고</div>
<div class="c" style="left:916px;top:648px">0</div>
<div class="c" style="left:555px;top:648px">6</div>
<div style="left:0;top:689px;width:989px;height:1px;background:#a0a0a0"></div>
<div style="left:19px;top:671px;width:13px;height:13px;border:1px solid #333;background:#fff"></div>
<div class="c" style="left:196px;top:671px;letter-spacing:0.4px">2023-02-13</div>
<div class="c" style="left:282px;top:671px;letter-spacing:0.4px">2023-04-14</div>
<div class="c" style="left:755px;top:671px;letter-spacing:0.4px">2023-02-14</div>
<div class="c" style="left:175px;top:672px;font-size:13px">린</div>
<div class="c" style="left:368px;top:671px">과세</div>
<div class="c" style="left:431px;top:671px">일반</div>
<div class="c" style="left:495px;top:671px">입고</div>
<div class="c" style="left:916px;top:671px">0</div>
<div class="c" style="left:555px;top:671px">5</div>
<div style="left:0;top:712px;width:989px;height:1px;background:#a0a0a0"></div>
<div style="left:19px;top:694px;width:13px;height:13px;border:1px solid #333;background:#fff"></div>
<div class="c" style="left:196px;top:694px;letter-spacing:0.4px">2023-02-14</div>
<div class="c" style="left:282px;top:694px;letter-spacing:0.4px">2023-04-14</div>
<div class="c" style="left:755px;top:694px;letter-spacing:0.4px">2023-02-15</div>
<div class="c" style="left:175px;top:695px;font-size:13px">린</div>
<div class="c" style="left:368px;top:694px">과세</div>
<div class="c" style="left:431px;top:694px">일반</div>
<div class="c" style="left:495px;top:694px">입고</div>
<div class="c" style="left:916px;top:694px">0</div>
<div class="c" style="left:555px;top:694px">4</div>
<div style="left:0;top:735px;width:989px;height:1px;background:#a0a0a0"></div>
<div style="left:19px;top:717px;width:13px;height:13px;border:1px solid #333;background:#fff"></div>
<div class="c" style="left:196px;top:717px;letter-spacing:0.4px">2023-02-15</div>
<div class="c" style="left:282px;top:717px;letter-spacing:0.4px">2023-04-14</div>
<div class="c" style="left:755px;top:717px;letter-spacing:0.4px">2023-02-16</div>
<div class="c" style="left:175px;top:718px;font-size:13px">린</div>
<div class="c" style="left:368px;top:717px">과세</div>
<div class="c" style="left:431px;top:717px">일반</div>
<div class="c" style="left:495px;top:717px">입고</div>
<div class="c" style="left:916px;top:717px">0</div>
<div class="c" style="left:555px;top:717px">3</div>
<div style="left:0;top:758px;width:989px;height:1px;background:#a0a0a0"></div>
<div style="left:19px;top:740px;width:13px;height:13px;border:1px solid #333;background:#fff"></div>
<div class="c" style="left:196px;top:740px;letter-spacing:0.4px">2023-02-16</div>
<div class="c" style="left:282px;top:740px;letter-spacing:0.4px">2023-04-17</div>
<div class="c" style="left:755px;top:740px;letter-spacing:0.4px">2023-02-17</div>
<div class="c" style="left:175px;top:741px;font-size:13px">린</div>
<div class="c" style="left:368px;top:740px">과세</div>
<div class="c" style="left:431px;top:740px">일반</div>
<div class="c" style="left:495px;top:740px">입고</div>
<div class="c" style="left:916px;top:740px">0</div>
<div class="c" style="left:555px;top:740px">4</div>
<div style="left:0;top:781px;width:989px;height:1px;background:#a0a0a0"></div>
<div style="left:19px;top:763px;width:13px;height:13px;border:1px solid #333;background:#fff"></div>
<div class="c" style="left:196px;top:763px;letter-spacing:0.4px">2023-02-17</div>
<div class="c" style="left:282px;top:763px;letter-spacing:0.4px">2023-04-18</div>
<div class="c" style="left:755px;top:763px;letter-spacing:0.4px">2023-02-20</div>
<div class="c" style="left:175px;top:764px;font-size:13px">린</div>
<div class="c" style="left:368px;top:763px">과세</div>
<div class="c" style="left:431px;top:763px">일반</div>
<div class="c" style="left:495px;top:763px">입고</div>
<div class="c" style="left:916px;top:763px">0</div>
<div class="c" style="left:555px;top:763px">2</div>
<div style="left:51px;top:0;width:1px;height:777px;background:#a0a0a0"></div>
<div style="left:125px;top:0;width:1px;height:777px;background:#a0a0a0"></div>
<div style="left:191px;top:0;width:1px;height:777px;background:#a0a0a0"></div>
<div style="left:277px;top:0;width:1px;height:777px;background:#a0a0a0"></div>
<div style="left:363px;top:0;width:1px;height:777px;background:#a0a0a0"></div>
<div style="left:426px;top:0;width:1px;height:777px;background:#a0a0a0"></div>
<div style="left:489px;top:0;width:1px;height:777px;background:#a0a0a0"></div>
<div style="left:552px;top:0;width:1px;height:777px;background:#a0a0a0"></div>
<div style="left:618px;top:0;width:1px;height:777px;background:#a0a0a0"></div>
<div style="left:676px;top:0;width:1px;height:777px;background:#a0a0a0"></div>
<div style="left:750px;top:0;width:1px;height:777px;background:#a0a0a0"></div>
<div style="left:838px;top:0;width:1px;height:777px;background:#a0a0a0"></div>
<div style="left:911px;top:0;width:1px;height:777px;background:#a0a0a0"></div>
<div style="left:984px;top:0;width:1px;height:777px;background:#a0a0a0"></div>
</div>
<div style="left:211px;top:174px;width:74px;height:22px;background:#0078d7"></div>
<div style="left:158px;top:135px;width:1009px;height:834px;border:2px solid #000;border-right-width:1px"></div>
<div style="left:1149px;top:137px;width:17px;height:814px;background:#f0f0f0"></div>
<div style="left:1150px;top:153px;width:15px;height:119px;background:#cdcdcd"></div>
<svg style="position:absolute;left:1153px;top:141px" width="10" height="7" viewBox="0 0 10 7"><path d="M1 6L5 2L9 6" fill="none" stroke="#606060" stroke-width="1.8"/></svg>
<svg style="position:absolute;left:1153px;top:938px" width="10" height="7" viewBox="0 0 10 7"><path d="M1 1L5 5L9 1" fill="none" stroke="#606060" stroke-width="1.8"/></svg>
<div style="left:160px;top:951px;width:1006px;height:16px;background:#f0f0f0"></div>
<div style="left:176px;top:952px;width:486px;height:15px;background:#cdcdcd"></div>
<svg style="position:absolute;left:164px;top:954px" width="7" height="10" viewBox="0 0 7 10"><path d="M6 1L2 5L6 9" fill="none" stroke="#606060" stroke-width="1.8"/></svg>
<svg style="position:absolute;left:1138px;top:954px" width="7" height="10" viewBox="0 0 7 10"><path d="M1 1L5 5L1 9" fill="none" stroke="#606060" stroke-width="1.8"/></svg>
<div style="left:1174px;top:38px;width:391px;height:1px;background:#dcdcdc"></div>
<div style="left:1177px;top:55px;width:385px;height:916px;border:1px solid #dcdcdc"></div>
<svg style="position:absolute;left:1180px;top:85px" width="379" height="78" viewBox="0 0 379 78">
<rect width="379" height="78" fill="#ff6a40"/>
<path d="M13 0L35 15.5L36 14z" fill="#ffb020"/>
<path d="M32.8 0L42.7 10.8L43.5 10.3z" fill="#ffe8e0"/>
<path d="M0 10.5L41 33L0 14.5z" fill="#e8452a"/>
<path d="M0 31.5L19.5 37.8L0 34z" fill="#fff0ea"/>
<path d="M0 64L35 54.2L0 69z" fill="#e8452a"/>
<path d="M10 78L29.8 67L12.5 78z" fill="#ffe0d8"/>
<path d="M36.7 78L44.4 73L39 78z" fill="#ffb020"/>
<path d="M46 13l5 3.5l-5 2.5z" fill="#d63a22"/><path d="M43 12.5l4.5 2.8l-4.5 2.8z" fill="#fff"/>
<path d="M47 33l7 4l-6 3z" fill="#d63a22"/><path d="M44.5 31l6.5 4.2l-6 3.4z" fill="#5eeac4"/>
<path d="M30 45l4 2.5l-4 2z" fill="#d63a22"/><path d="M28 45l4 2.2l-4 2z" fill="#fff"/>
<path d="M52 60l4 2.5l-4 2z" fill="#d63a22"/><path d="M49.5 58.5l4.5 2.3l-4.5 2.4z" fill="#ffe400"/>
<path d="M345 0L330.5 12.9L331.5 13z" fill="#ffe8e0"/>
<path d="M369.2 0L334.8 22L336 22.5L371 0z" fill="#ffaa10"/>
<path d="M379 9L349.4 28L350 28.3L379 11z" fill="#ffe0d8"/>
<path d="M379 24L344.3 40L379 28z" fill="#e8452a"/>
<path d="M379 64.5L351 60.6L379 67z" fill="#fff0ea"/>
<path d="M379 76L334.8 65L379 78z" fill="#e8452a"/>
<path d="M327 25l7 3l-5 4z" fill="#d63a22"/><path d="M321 24l7 2.5l-5 5.5z" fill="#ffe800"/>
<path d="M342 36l4 2.5l-4 2.5z" fill="#d63a22"/><path d="M336 35.5l6.5 0.5l-3 4.5z" fill="#fff"/>
<path d="M345.5 55l3 2l-3 1.6z" fill="#d63a22"/><path d="M342.5 53.5l4 1.5l-3 2.5z" fill="#ffe800"/>
<path d="M327 59l4 3l-4 2z" fill="#d63a22"/><path d="M323 56.5l5 4l-5 2.5z" fill="#5eeac4"/>
<rect x="149.5" y="56" width="78.5" height="14.4" rx="7.2" fill="#111"/>
</svg>
<div style="left:1300px;top:93px;width:141px;font-size:12px;line-height:14px;font-weight:bold;letter-spacing:-0.6px;color:#8ff0c8;text-align:center">마케팅 <span style="color:#ffd9cc;font-weight:normal">또는</span> 웹 데이터 수집 <span style="color:#ffd9cc;font-weight:normal">등</span></div>
<div style="left:1312px;top:108px;width:118px;font-size:12px;line-height:14px;font-weight:bold;letter-spacing:-0.6px;color:#8ff0c8;text-align:center">프로그램 문의<span style="color:#ffd9cc;font-weight:normal">하세요!</span></div>
<div style="left:1264px;top:126px;font-size:8.5px;line-height:10px;color:#111;letter-spacing:-0.3px;transform:scaleX(0.91);transform-origin:0 0"><b>vb6.0</b> 및 <b>vba</b>(엑셀)<b>+vb.net</b> 프로그램 저렴하게 제작해드립니다.</div>
<div style="left:1330px;top:143px;width:78px;font-size:8px;line-height:10px;color:#fff;text-align:center;letter-spacing:-0.3px">문의 - <span style="color:#f5d442">카톡 : vbnvba</span></div>
<div style="left:1177px;top:186px;width:386px;height:784px;border:1px solid #7f8b99;background:#fff"></div>
<div style="left:1544px;top:187px;width:17px;height:782px;background:#f0f0f0"></div>
<div style="left:1545px;top:903px;width:15px;height:48px;background:#cdcdcd"></div>
<svg style="position:absolute;left:1548px;top:193px" width="10" height="7" viewBox="0 0 10 7"><path d="M1 6L5 2L9 6" fill="none" stroke="#606060" stroke-width="1.8"/></svg>
<svg style="position:absolute;left:1548px;top:957px" width="10" height="7" viewBox="0 0 10 7"><path d="M1 1L5 5L9 1" fill="none" stroke="#606060" stroke-width="1.8"/></svg>
<div style="left:1178px;top:956px;width:365px;height:12px;background:#0078d7"></div>
<div class="g" style="left:1182px;top:187px;color:#000">Box:1&nbsp;<b>수량</b>:27&nbsp;</div>
<div class="g" style="left:1182px;top:199px;color:#000">Box:1&nbsp;<b>수량</b>:39&nbsp;</div>
<div class="g" style="left:1182px;top:211px;color:#000">Box:1&nbsp;<b>수량</b>:4&nbsp;<b>상</b></div>
<div class="g" style="left:1182px;top:223px;color:#000">Box:1&nbsp;<b>수량</b>:4&nbsp;<b>상</b></div>
<div class="g" style="left:1182px;top:235px;color:#000">Box:1&nbsp;<b>수량</b>:2&nbsp;<b>상</b></div>
<div class="g" style="left:1182px;top:259px;color:#000"><b>발주번호</b>&nbsp;&#x27;48645</div>
<div class="g" style="left:1182px;top:271px;color:#000">Box:1&nbsp;<b>수량</b>:6&nbsp;<b>상</b></div>
<div class="g" style="left:1182px;top:295px;color:#000"><b>발주번호</b>&nbsp;&#x27;48645</div>
<div class="g" style="left:1182px;top:307px;color:#000">Box:1&nbsp;<b>수량</b>:6&nbsp;<b>상</b></div>
<div class="g" style="left:1182px;top:331px;color:#000"><b>발주번호</b>&nbsp;&#x27;48645</div>
<div class="g" style="left:1182px;top:343px;color:#000">Box:1&nbsp;<b>수량</b>:6&nbsp;<b>상</b></div>
<div class="g" style="left:1182px;top:367px;color:#000"><b>발주번호</b>&nbsp;&#x27;4859</div>
<div class="g" style="left:1182px;top:379px;color:#000">Box:1&nbsp;<b>수량</b>:6&nbsp;<b>상</b></div>
<div class="g" style="left:1182px;top:403px;color:#000"><b>발주번호</b>&nbsp;&#x27;4859</div>
<div class="g" style="left:1182px;top:415px;color:#000">Box:1&nbsp;<b>수량</b>:6&nbsp;<b>상</b></div>
<div class="g" style="left:1182px;top:427px;color:#000">Box:1&nbsp;<b>수량</b>:6&nbsp;<b>상</b></div>
<div class="g" style="left:1182px;top:439px;color:#000">Box:1&nbsp;<b>수량</b>:6&nbsp;<b>상</b></div>
<div class="g" style="left:1182px;top:463px;color:#000"><b>모두</b>&nbsp;<b>검색하여</b>&nbsp;<b>데이터를</b>&nbsp;<b>정리</b>&nbsp;<b>중입니다</b>.</div>
<div class="g" style="left:1182px;top:487px;color:#000"><b>리스트를</b>&nbsp;<b>보기</b>&nbsp;<b>좋게</b>&nbsp;<b>정리합니다</b>.</div>
<div class="g" style="left:1182px;top:511px;color:#000"><b>이미지를</b>&nbsp;<b>불러옵니다</b>.</div>
<div class="g" style="left:1182px;top:535px;color:#000"><b>모든</b>&nbsp;<b>검색</b>&nbsp;<b>과정이</b>&nbsp;<b>마무리되었습니다</b>.</div>
<div class="g" style="left:1182px;top:559px;color:#000"><b>검색을</b>&nbsp;<b>시작합니다</b>.</div>
<div class="g" style="left:1182px;top:583px;color:#000"><b>리스트를</b>&nbsp;<b>보기</b>&nbsp;<b>좋게</b>&nbsp;<b>정리합니다</b>.</div>
<div class="g" style="left:1182px;top:607px;color:#000"><b>이미지를</b>&nbsp;<b>불러옵니다</b>.</div>
<div class="g" style="left:1182px;top:631px;color:#000"><b>검색을</b>&nbsp;<b>완료하였습니다</b>.</div>
<div class="g" style="left:1182px;top:679px;color:#000"><b>검색을</b>&nbsp;<b>시작합니다</b>.</div>
<div class="g" style="left:1182px;top:703px;color:#000"><b>리스트를</b>&nbsp;<b>보기</b>&nbsp;<b>좋게</b>&nbsp;<b>정리합니다</b>.</div>
<div class="g" style="left:1182px;top:727px;color:#000"><b>이미지를</b>&nbsp;<b>불러옵니다</b>.</div>
<div class="g" style="left:1182px;top:751px;color:#000"><b>검색을</b>&nbsp;<b>완료하였습니다</b>.</div>
<div class="g" style="left:1182px;top:787px;color:#000"><b>정산</b>&nbsp;<b>리스트를</b>&nbsp;<b>다운로드합니다</b>.</div>
<div class="g" style="left:1182px;top:799px;color:#000"><b>정산</b>&nbsp;<b>리스트를</b>&nbsp;<b>로컬에</b>&nbsp;<b>저장합니다</b>.</div>
<div class="g" style="left:1182px;top:811px;color:#000"><b>다운로드한</b>&nbsp;<b>파일을</b>&nbsp;<b>불러옵니다</b>.</div>
<div class="g" style="left:1182px;top:835px;color:#000"><b>검색을</b>&nbsp;<b>시작합니다</b>.</div>
<div class="g" style="left:1182px;top:847px;color:#000">[<b>지급일자</b>]&gt;=&#x27;2023-01-01&#x27;&nbsp;AND&nbsp;[<b>지급일자</b>]&lt;=&#x27;2023-11-09&#x27;</div>
<div class="g" style="left:1182px;top:871px;color:#000"><b>임시파일을</b>&nbsp;<b>제거합니다</b>.</div>
<div class="g" style="left:1182px;top:883px;color:#000"><b>정산</b>&nbsp;<b>리스트를</b>&nbsp;<b>다운로드합니다</b>.</div>
<div class="g" style="left:1182px;top:895px;color:#000"><b>정산</b>&nbsp;<b>리스트를</b>&nbsp;<b>로컬에</b>&nbsp;<b>저장합니다</b>.</div>
<div class="g" style="left:1182px;top:907px;color:#000"><b>다운로드한</b>&nbsp;<b>파일을</b>&nbsp;<b>불러옵니다</b>.</div>
<div class="g" style="left:1182px;top:919px;color:#000">&#x27;1&nbsp;&nbsp;&nbsp;&nbsp;&nbsp;&nbsp;&#x27;&nbsp;<b>의</b>&nbsp;<b>데이터을</b>&nbsp;<b>추출합니다</b>.</div>
<div class="lg" style="left:1182px;top:931px;color:#000"><b>기간</b>&nbsp;2023.02.21&nbsp;~&nbsp;2024.01.05&nbsp;:&nbsp;<b>지급예정금액</b><span style="display:inline-block;width:65px"></span><b>원</b></div>
<div class="g" style="left:1182px;top:955px;color:#fff"><b>데이터</b>&nbsp;<b>가져오기를</b>&nbsp;<b>완료하였습니다</b>.</div>
<svg style="position:absolute;left:0;top:0" width="1566" height="977"><path fill="#1584db" d="M216 176h8v8h-8z"/><path fill="#248ade" d="M224 176h8v8h-8zM240 176h8v8h-8zM248 176h8v8h-8z"/><path fill="#1884db" d="M232 176h8v8h-8z"/><path fill="#1b87db" d="M256 176h8v8h-8zM272 176h8v8h-8z"/><path fill="#278dde" d="M264 176h8v8h-8z"/><path fill="#63a8de" d="M280 176h8v8h-8z"/><path fill="#f0f0f3" d="M288 176h8v8h-8zM264 200h8v8h-8zM288 200h8v8h-8zM312 232h8v8h-8zM264 280h8v8h-8zM320 280h8v8h-8zM328 280h8v8h-8zM232 336h8v8h-8zM312 336h8v8h-8zM320 336h8v8h-8zM288 360h8v8h-8zM320 360h8v8h-8zM328 360h8v8h-8zM232 416h8v8h-8zM296 416h8v8h-8zM216 432h8v8h-8zM256 432h8v8h-8zM288 464h8v8h-8zM312 464h8v8h-8zM240 520h8v8h-8zM320 520h8v8h-8zM328 520h8v8h-8zM232 544h8v8h-8zM256 568h8v8h-8zM248 576h8v8h-8zM288 592h8v8h-8zM288 616h8v8h-8zM320 616h8v8h-8zM312 624h8v8h-8zM248 640h8v8h-8zM304 640h8v8h-8zM256 648h8v8h-8zM304 680h8v8h-8zM256 704h8v8h-8zM240 752h8v8h-8zM272 752h8v8h-8zM288 752h8v8h-8zM240 760h8v8h-8zM272 760h8v8h-8zM272 776h8v8h-8zM240 784h8v8h-8zM240 800h8v8h-8zM288 800h8v8h-8zM288 808h8v8h-8zM320 808h8v8h-8zM288 864h8v8h-8zM304 864h8v8h-8zM248 888h8v8h-8zM328 888h8v8h-8zM216 912h8v8h-8zM224 912h8v8h-8zM264 912h8v8h-8zM304 936h8v8h-8zM312 936h8v8h-8zM272 944h8v8h-8zM752 176h8v8h-8zM728 200h8v8h-8zM736 256h8v8h-8zM728 280h8v8h-8zM736 384h8v8h-8zM752 416h8v8h-8zM744 440h8v8h-8zM720 464h8v8h-8zM728 544h8v8h-8zM744 544h8v8h-8zM752 568h8v8h-8zM752 592h8v8h-8zM728 600h8v8h-8zM720 624h8v8h-8zM728 704h8v8h-8zM720 728h8v8h-8zM744 752h8v8h-8zM728 776h8v8h-8zM720 808h8v8h-8zM752 808h8v8h-8zM728 832h8v8h-8zM736 832h8v8h-8zM720 864h8v8h-8zM744 912h8v8h-8zM752 912h8v8h-8zM744 936h8v8h-8zM808 200h8v8h-8zM784 256h8v8h-8zM784 280h8v8h-8zM792 360h8v8h-8zM800 360h8v8h-8zM800 384h8v8h-8zM784 440h8v8h-8zM824 440h8v8h-8zM784 456h8v8h-8zM808 552h8v8h-8zM824 576h8v8h-8zM816 648h8v8h-8zM824 664h8v8h-8zM792 728h8v8h-8zM800 728h8v8h-8zM808 728h8v8h-8zM792 752h8v8h-8zM784 808h8v8h-8zM808 832h8v8h-8zM816 832h8v8h-8zM808 896h8v8h-8zM800 912h8v8h-8zM816 912h8v8h-8zM784 936h8v8h-8zM880 200h8v8h-8zM872 232h8v8h-8zM880 232h8v8h-8zM856 256h8v8h-8zM872 256h8v8h-8zM856 280h8v8h-8zM856 320h8v8h-8zM880 320h8v8h-8zM872 360h8v8h-8zM864 384h8v8h-8zM880 384h8v8h-8zM872 432h8v8h-8zM840 440h8v8h-8zM864 440h8v8h-8zM880 440h8v8h-8zM856 464h8v8h-8zM880 464h8v8h-8zM880 504h8v8h-8zM848 600h8v8h-8zM880 616h8v8h-8zM848 624h8v8h-8zM872 624h8v8h-8zM848 648h8v8h-8zM864 704h8v8h-8zM840 728h8v8h-8zM848 728h8v8h-8zM864 808h8v8h-8zM840 888h8v8h-8zM864 888h8v8h-8z"/><path fill="#dbdbde" d="M296 176h8v8h-8zM296 184h8v8h-8zM232 208h8v8h-8zM256 208h8v8h-8zM312 208h8v8h-8zM288 232h8v8h-8zM304 232h8v8h-8zM328 232h8v8h-8zM216 248h8v8h-8zM224 248h8v8h-8zM248 248h8v8h-8zM232 272h8v8h-8zM312 272h8v8h-8zM248 320h8v8h-8zM232 368h8v8h-8zM296 368h8v8h-8zM312 384h8v8h-8zM232 392h8v8h-8zM240 392h8v8h-8zM264 408h8v8h-8zM328 464h8v8h-8zM224 528h8v8h-8zM296 568h8v8h-8zM224 576h8v8h-8zM304 576h8v8h-8zM224 592h8v8h-8zM248 592h8v8h-8zM256 592h8v8h-8zM304 592h8v8h-8zM328 600h8v8h-8zM296 640h8v8h-8zM224 664h8v8h-8zM264 688h8v8h-8zM328 688h8v8h-8zM256 712h8v8h-8zM288 728h8v8h-8zM224 736h8v8h-8zM232 736h8v8h-8zM224 760h8v8h-8zM224 776h8v8h-8zM232 784h8v8h-8zM304 800h8v8h-8zM328 808h8v8h-8zM328 832h8v8h-8zM280 848h8v8h-8zM288 848h8v8h-8zM296 848h8v8h-8zM320 848h8v8h-8zM232 872h8v8h-8zM240 872h8v8h-8zM216 896h8v8h-8zM248 896h8v8h-8zM288 896h8v8h-8zM328 944h8v8h-8zM720 184h8v8h-8zM736 232h8v8h-8zM744 272h8v8h-8zM720 296h8v8h-8zM728 320h8v8h-8zM744 344h8v8h-8zM744 384h8v8h-8zM728 408h8v8h-8zM744 408h8v8h-8zM720 504h8v8h-8zM728 504h8v8h-8zM736 528h8v8h-8zM728 712h8v8h-8zM720 760h8v8h-8zM744 824h8v8h-8zM744 920h8v8h-8zM784 224h8v8h-8zM792 248h8v8h-8zM792 392h8v8h-8zM800 456h8v8h-8zM800 480h8v8h-8zM808 568h8v8h-8zM784 592h8v8h-8zM784 616h8v8h-8zM800 616h8v8h-8zM808 616h8v8h-8zM800 640h8v8h-8zM808 664h8v8h-8zM784 712h8v8h-8zM808 760h8v8h-8zM792 800h8v8h-8zM784 824h8v8h-8zM784 848h8v8h-8zM872 184h8v8h-8zM840 248h8v8h-8zM848 368h8v8h-8zM848 408h8v8h-8zM848 416h8v8h-8zM840 528h8v8h-8zM872 552h8v8h-8zM872 600h8v8h-8zM872 616h8v8h-8zM840 640h8v8h-8zM872 640h8v8h-8zM856 664h8v8h-8zM848 736h8v8h-8zM880 736h8v8h-8zM848 800h8v8h-8zM848 824h8v8h-8zM840 896h8v8h-8zM848 920h8v8h-8z"/><path fill="#e4e4e7" d="M304 176h8v8h-8zM264 208h8v8h-8zM256 224h8v8h-8zM248 232h8v8h-8zM256 248h8v8h-8zM304 248h8v8h-8zM224 256h8v8h-8zM256 256h8v8h-8zM320 256h8v8h-8zM240 272h8v8h-8zM272 272h8v8h-8zM240 280h8v8h-8zM304 280h8v8h-8zM248 296h8v8h-8zM264 296h8v8h-8zM296 304h8v8h-8zM304 328h8v8h-8zM296 360h8v8h-8zM312 360h8v8h-8zM240 368h8v8h-8zM272 368h8v8h-8zM304 368h8v8h-8zM328 368h8v8h-8zM216 392h8v8h-8zM272 392h8v8h-8zM272 408h8v8h-8zM248 416h8v8h-8zM272 416h8v8h-8zM224 440h8v8h-8zM264 440h8v8h-8zM312 440h8v8h-8zM216 464h8v8h-8zM304 464h8v8h-8zM320 464h8v8h-8zM240 480h8v8h-8zM264 480h8v8h-8zM296 480h8v8h-8zM304 488h8v8h-8zM312 488h8v8h-8zM288 512h8v8h-8zM304 512h8v8h-8zM232 528h8v8h-8zM328 544h8v8h-8zM224 568h8v8h-8zM320 568h8v8h-8zM328 568h8v8h-8zM232 592h8v8h-8zM328 592h8v8h-8zM248 600h8v8h-8zM272 616h8v8h-8zM264 624h8v8h-8zM304 624h8v8h-8zM232 640h8v8h-8zM264 640h8v8h-8zM288 648h8v8h-8zM288 664h8v8h-8zM320 664h8v8h-8zM304 672h8v8h-8zM272 696h8v8h-8zM312 696h8v8h-8zM264 736h8v8h-8zM304 752h8v8h-8zM248 776h8v8h-8zM248 784h8v8h-8zM304 784h8v8h-8zM224 800h8v8h-8zM264 800h8v8h-8zM248 808h8v8h-8zM272 808h8v8h-8zM256 824h8v8h-8zM296 824h8v8h-8zM224 832h8v8h-8zM320 832h8v8h-8zM224 856h8v8h-8zM264 856h8v8h-8zM288 872h8v8h-8zM320 888h8v8h-8zM296 936h8v8h-8zM248 944h8v8h-8zM264 944h8v8h-8zM288 944h8v8h-8zM728 208h8v8h-8zM752 208h8v8h-8zM720 248h8v8h-8zM744 256h8v8h-8zM736 272h8v8h-8zM736 320h8v8h-8zM760 344h8v8h-8zM728 384h8v8h-8zM720 408h8v8h-8zM736 408h8v8h-8zM728 416h8v8h-8zM736 416h8v8h-8zM744 416h8v8h-8zM720 432h8v8h-8zM744 432h8v8h-8zM744 464h8v8h-8zM752 480h8v8h-8zM744 568h8v8h-8zM728 592h8v8h-8zM736 600h8v8h-8zM736 616h8v8h-8zM744 624h8v8h-8zM744 672h8v8h-8zM752 712h8v8h-8zM720 752h8v8h-8zM736 808h8v8h-8zM728 824h8v8h-8zM744 848h8v8h-8zM744 896h8v8h-8zM752 944h8v8h-8zM784 200h8v8h-8zM784 208h8v8h-8zM808 208h8v8h-8zM808 224h8v8h-8zM784 232h8v8h-8zM808 256h8v8h-8zM816 304h8v8h-8zM792 344h8v8h-8zM792 384h8v8h-8zM816 488h8v8h-8zM800 544h8v8h-8zM792 552h8v8h-8zM800 568h8v8h-8zM792 576h8v8h-8zM800 576h8v8h-8zM816 600h8v8h-8zM808 624h8v8h-8zM808 672h8v8h-8zM816 688h8v8h-8zM784 760h8v8h-8zM800 760h8v8h-8zM784 776h8v8h-8zM808 776h8v8h-8zM792 784h8v8h-8zM792 824h8v8h-8zM800 896h8v8h-8zM808 920h8v8h-8zM864 208h8v8h-8zM848 224h8v8h-8zM864 224h8v8h-8zM840 272h8v8h-8zM872 272h8v8h-8zM864 344h8v8h-8zM848 384h8v8h-8zM880 392h8v8h-8zM872 440h8v8h-8zM848 480h8v8h-8zM864 576h8v8h-8zM848 592h8v8h-8zM840 616h8v8h-8zM872 672h8v8h-8zM864 752h8v8h-8zM848 784h8v8h-8zM856 784h8v8h-8zM872 824h8v8h-8zM856 856h8v8h-8z"/><path fill="#e7e7ea" d="M312 176h8v8h-8zM232 200h8v8h-8zM304 208h8v8h-8zM312 224h8v8h-8zM216 232h8v8h-8zM264 248h8v8h-8zM216 256h8v8h-8zM248 256h8v8h-8zM272 280h8v8h-8zM224 296h8v8h-8zM216 360h8v8h-8zM248 368h8v8h-8zM288 368h8v8h-8zM232 384h8v8h-8zM288 392h8v8h-8zM232 408h8v8h-8zM288 408h8v8h-8zM240 416h8v8h-8zM288 416h8v8h-8zM328 416h8v8h-8zM232 432h8v8h-8zM216 440h8v8h-8zM232 440h8v8h-8zM240 440h8v8h-8zM240 456h8v8h-8zM264 456h8v8h-8zM288 456h8v8h-8zM224 480h8v8h-8zM288 504h8v8h-8zM312 520h8v8h-8zM216 544h8v8h-8zM240 544h8v8h-8zM256 544h8v8h-8zM224 552h8v8h-8zM264 568h8v8h-8zM304 568h8v8h-8zM216 576h8v8h-8zM296 576h8v8h-8zM264 592h8v8h-8zM216 600h8v8h-8zM288 600h8v8h-8zM320 600h8v8h-8zM232 616h8v8h-8zM248 616h8v8h-8zM248 624h8v8h-8zM256 624h8v8h-8zM296 704h8v8h-8zM304 704h8v8h-8zM248 752h8v8h-8zM288 760h8v8h-8zM256 776h8v8h-8zM232 800h8v8h-8zM328 800h8v8h-8zM240 808h8v8h-8zM216 848h8v8h-8zM240 848h8v8h-8zM216 872h8v8h-8zM296 888h8v8h-8zM312 888h8v8h-8zM240 896h8v8h-8zM232 912h8v8h-8zM256 912h8v8h-8zM312 912h8v8h-8zM320 912h8v8h-8zM232 920h8v8h-8zM320 936h8v8h-8zM736 200h8v8h-8zM744 208h8v8h-8zM728 232h8v8h-8zM752 248h8v8h-8zM720 360h8v8h-8zM720 368h8v8h-8zM736 368h8v8h-8zM720 392h8v8h-8zM728 392h8v8h-8zM752 392h8v8h-8zM760 392h8v8h-8zM728 432h8v8h-8zM736 440h8v8h-8zM728 480h8v8h-8zM752 528h8v8h-8zM736 544h8v8h-8zM728 576h8v8h-8zM744 576h8v8h-8zM720 592h8v8h-8zM736 592h8v8h-8zM744 592h8v8h-8zM720 616h8v8h-8zM744 616h8v8h-8zM720 688h8v8h-8zM752 728h8v8h-8zM752 848h8v8h-8zM752 936h8v8h-8zM800 224h8v8h-8zM792 232h8v8h-8zM808 232h8v8h-8zM816 232h8v8h-8zM808 248h8v8h-8zM800 256h8v8h-8zM792 368h8v8h-8zM792 416h8v8h-8zM784 432h8v8h-8zM808 440h8v8h-8zM800 464h8v8h-8zM800 528h8v8h-8zM800 552h8v8h-8zM816 568h8v8h-8zM792 592h8v8h-8zM784 640h8v8h-8zM816 640h8v8h-8zM808 688h8v8h-8zM816 736h8v8h-8zM784 752h8v8h-8zM808 800h8v8h-8zM800 808h8v8h-8zM800 848h8v8h-8zM784 944h8v8h-8zM800 944h8v8h-8zM848 176h8v8h-8zM856 224h8v8h-8zM840 256h8v8h-8zM872 456h8v8h-8zM840 544h8v8h-8zM872 568h8v8h-8zM880 592h8v8h-8zM856 600h8v8h-8zM864 616h8v8h-8zM840 624h8v8h-8zM864 640h8v8h-8zM848 688h8v8h-8zM856 736h8v8h-8zM840 760h8v8h-8zM872 760h8v8h-8zM840 776h8v8h-8zM840 784h8v8h-8zM840 832h8v8h-8zM840 936h8v8h-8zM864 936h8v8h-8z"/><path fill="#eaeaed" d="M320 176h8v8h-8zM224 200h8v8h-8zM296 200h8v8h-8zM248 224h8v8h-8zM288 224h8v8h-8zM288 248h8v8h-8zM240 256h8v8h-8zM288 256h8v8h-8zM320 272h8v8h-8zM304 336h8v8h-8zM264 344h8v8h-8zM304 360h8v8h-8zM216 384h8v8h-8zM248 384h8v8h-8zM264 384h8v8h-8zM256 392h8v8h-8zM216 408h8v8h-8zM328 408h8v8h-8zM320 416h8v8h-8zM288 440h8v8h-8zM304 440h8v8h-8zM328 440h8v8h-8zM224 456h8v8h-8zM304 496h8v8h-8zM320 496h8v8h-8zM272 504h8v8h-8zM232 520h8v8h-8zM264 520h8v8h-8zM264 544h8v8h-8zM312 544h8v8h-8zM232 568h8v8h-8zM272 568h8v8h-8zM288 568h8v8h-8zM240 576h8v8h-8zM264 576h8v8h-8zM216 592h8v8h-8zM272 592h8v8h-8zM224 600h8v8h-8zM232 600h8v8h-8zM240 600h8v8h-8zM216 624h8v8h-8zM224 624h8v8h-8zM296 624h8v8h-8zM312 648h8v8h-8zM328 648h8v8h-8zM328 664h8v8h-8zM328 704h8v8h-8zM224 712h8v8h-8zM216 728h8v8h-8zM256 728h8v8h-8zM328 752h8v8h-8zM216 776h8v8h-8zM288 776h8v8h-8zM272 784h8v8h-8zM288 784h8v8h-8zM312 784h8v8h-8zM328 784h8v8h-8zM312 800h8v8h-8zM224 808h8v8h-8zM264 808h8v8h-8zM304 808h8v8h-8zM312 808h8v8h-8zM264 832h8v8h-8zM328 848h8v8h-8zM296 864h8v8h-8zM272 896h8v8h-8zM328 912h8v8h-8zM232 936h8v8h-8zM264 936h8v8h-8zM272 936h8v8h-8zM728 176h8v8h-8zM744 176h8v8h-8zM720 200h8v8h-8zM744 200h8v8h-8zM720 256h8v8h-8zM720 320h8v8h-8zM728 360h8v8h-8zM752 360h8v8h-8zM720 416h8v8h-8zM720 440h8v8h-8zM728 440h8v8h-8zM736 456h8v8h-8zM728 464h8v8h-8zM720 544h8v8h-8zM720 552h8v8h-8zM720 568h8v8h-8zM728 568h8v8h-8zM736 576h8v8h-8zM744 600h8v8h-8zM736 648h8v8h-8zM744 728h8v8h-8zM752 752h8v8h-8zM752 760h8v8h-8zM728 784h8v8h-8zM728 800h8v8h-8zM752 800h8v8h-8zM752 832h8v8h-8zM728 912h8v8h-8zM720 920h8v8h-8zM784 176h8v8h-8zM800 176h8v8h-8zM800 200h8v8h-8zM792 208h8v8h-8zM784 248h8v8h-8zM792 280h8v8h-8zM816 320h8v8h-8zM808 384h8v8h-8zM808 392h8v8h-8zM792 408h8v8h-8zM800 432h8v8h-8zM816 456h8v8h-8zM824 480h8v8h-8zM808 528h8v8h-8zM792 544h8v8h-8zM784 568h8v8h-8zM784 600h8v8h-8zM792 624h8v8h-8zM792 648h8v8h-8zM792 664h8v8h-8zM792 760h8v8h-8zM808 784h8v8h-8zM800 832h8v8h-8zM784 872h8v8h-8zM792 912h8v8h-8zM792 936h8v8h-8zM808 936h8v8h-8zM792 944h8v8h-8zM856 176h8v8h-8zM848 208h8v8h-8zM856 232h8v8h-8zM864 248h8v8h-8zM880 368h8v8h-8zM840 384h8v8h-8zM856 416h8v8h-8zM872 416h8v8h-8zM864 456h8v8h-8zM872 528h8v8h-8zM880 528h8v8h-8zM856 544h8v8h-8zM864 568h8v8h-8zM840 576h8v8h-8zM848 616h8v8h-8zM856 616h8v8h-8zM880 624h8v8h-8zM840 648h8v8h-8zM880 648h8v8h-8zM840 712h8v8h-8zM864 728h8v8h-8zM872 728h8v8h-8zM872 736h8v8h-8zM856 752h8v8h-8zM848 760h8v8h-8zM840 808h8v8h-8zM872 808h8v8h-8zM880 808h8v8h-8zM864 824h8v8h-8zM880 896h8v8h-8zM872 912h8v8h-8zM856 936h8v8h-8zM872 944h8v8h-8z"/><path fill="#f3f3f3" d="M328 176h8v8h-8zM288 192h8v8h-8zM296 192h8v8h-8zM304 192h8v8h-8zM312 192h8v8h-8zM320 192h8v8h-8zM328 192h8v8h-8zM280 200h8v8h-8zM280 208h8v8h-8zM216 216h8v8h-8zM224 216h8v8h-8zM232 216h8v8h-8zM240 216h8v8h-8zM248 216h8v8h-8zM256 216h8v8h-8zM264 216h8v8h-8zM272 216h8v8h-8zM288 216h8v8h-8zM296 216h8v8h-8zM304 216h8v8h-8zM312 216h8v8h-8zM320 216h8v8h-8zM328 216h8v8h-8zM280 232h8v8h-8zM216 240h8v8h-8zM224 240h8v8h-8zM232 240h8v8h-8zM240 240h8v8h-8zM248 240h8v8h-8zM256 240h8v8h-8zM264 240h8v8h-8zM272 240h8v8h-8zM288 240h8v8h-8zM296 240h8v8h-8zM304 240h8v8h-8zM312 240h8v8h-8zM320 240h8v8h-8zM328 240h8v8h-8zM272 248h8v8h-8zM280 248h8v8h-8zM272 256h8v8h-8zM280 256h8v8h-8zM216 264h8v8h-8zM224 264h8v8h-8zM232 264h8v8h-8zM240 264h8v8h-8zM248 264h8v8h-8zM256 264h8v8h-8zM264 264h8v8h-8zM272 264h8v8h-8zM288 264h8v8h-8zM296 264h8v8h-8zM304 264h8v8h-8zM312 264h8v8h-8zM320 264h8v8h-8zM328 264h8v8h-8zM216 280h8v8h-8zM224 280h8v8h-8zM312 280h8v8h-8zM216 288h8v8h-8zM224 288h8v8h-8zM232 288h8v8h-8zM240 288h8v8h-8zM248 288h8v8h-8zM256 288h8v8h-8zM264 288h8v8h-8zM272 288h8v8h-8zM320 288h8v8h-8zM280 296h8v8h-8zM272 304h8v8h-8zM312 328h8v8h-8zM240 336h8v8h-8zM264 336h8v8h-8zM280 336h8v8h-8zM280 344h8v8h-8zM216 352h8v8h-8zM224 352h8v8h-8zM232 352h8v8h-8zM240 352h8v8h-8zM248 352h8v8h-8zM256 352h8v8h-8zM264 352h8v8h-8zM272 352h8v8h-8zM304 352h8v8h-8zM312 352h8v8h-8zM328 352h8v8h-8zM224 360h8v8h-8zM232 360h8v8h-8zM240 360h8v8h-8zM248 360h8v8h-8zM280 360h8v8h-8zM280 368h8v8h-8zM216 376h8v8h-8zM224 376h8v8h-8zM232 376h8v8h-8zM240 376h8v8h-8zM248 376h8v8h-8zM256 376h8v8h-8zM264 376h8v8h-8zM272 376h8v8h-8zM288 376h8v8h-8zM296 376h8v8h-8zM304 376h8v8h-8zM312 376h8v8h-8zM320 376h8v8h-8zM328 376h8v8h-8zM280 384h8v8h-8zM288 384h8v8h-8zM216 400h8v8h-8zM224 400h8v8h-8zM232 400h8v8h-8zM240 400h8v8h-8zM248 400h8v8h-8zM256 400h8v8h-8zM264 400h8v8h-8zM272 400h8v8h-8zM288 400h8v8h-8zM296 400h8v8h-8zM304 400h8v8h-8zM312 400h8v8h-8zM320 400h8v8h-8zM328 400h8v8h-8zM280 408h8v8h-8zM256 416h8v8h-8zM216 424h8v8h-8zM224 424h8v8h-8zM232 424h8v8h-8zM240 424h8v8h-8zM248 424h8v8h-8zM256 424h8v8h-8zM264 424h8v8h-8zM272 424h8v8h-8zM288 424h8v8h-8zM296 424h8v8h-8zM304 424h8v8h-8zM312 424h8v8h-8zM320 424h8v8h-8zM328 424h8v8h-8zM264 432h8v8h-8zM280 432h8v8h-8zM280 440h8v8h-8zM216 448h8v8h-8zM224 448h8v8h-8zM232 448h8v8h-8zM240 448h8v8h-8zM248 448h8v8h-8zM256 448h8v8h-8zM264 448h8v8h-8zM272 448h8v8h-8zM288 448h8v8h-8zM296 448h8v8h-8zM304 448h8v8h-8zM312 448h8v8h-8zM320 448h8v8h-8zM328 448h8v8h-8zM280 456h8v8h-8zM232 464h8v8h-8zM280 464h8v8h-8zM296 464h8v8h-8zM216 472h8v8h-8zM224 472h8v8h-8zM232 472h8v8h-8zM240 472h8v8h-8zM248 472h8v8h-8zM256 472h8v8h-8zM264 472h8v8h-8zM272 472h8v8h-8zM312 472h8v8h-8zM280 480h8v8h-8zM280 496h8v8h-8zM280 504h8v8h-8zM224 512h8v8h-8zM248 512h8v8h-8zM272 512h8v8h-8zM256 520h8v8h-8zM280 520h8v8h-8zM296 520h8v8h-8zM272 528h8v8h-8zM280 528h8v8h-8zM216 536h8v8h-8zM224 536h8v8h-8zM232 536h8v8h-8zM240 536h8v8h-8zM248 536h8v8h-8zM256 536h8v8h-8zM264 536h8v8h-8zM272 536h8v8h-8zM216 560h8v8h-8zM224 560h8v8h-8zM232 560h8v8h-8zM240 560h8v8h-8zM248 560h8v8h-8zM256 560h8v8h-8zM264 560h8v8h-8zM272 560h8v8h-8zM288 560h8v8h-8zM296 560h8v8h-8zM304 560h8v8h-8zM312 560h8v8h-8zM320 560h8v8h-8zM328 560h8v8h-8zM280 568h8v8h-8zM280 576h8v8h-8zM216 584h8v8h-8zM224 584h8v8h-8zM232 584h8v8h-8zM240 584h8v8h-8zM248 584h8v8h-8zM256 584h8v8h-8zM264 584h8v8h-8zM272 584h8v8h-8zM288 584h8v8h-8zM296 584h8v8h-8zM304 584h8v8h-8zM312 584h8v8h-8zM320 584h8v8h-8zM328 584h8v8h-8zM216 608h8v8h-8zM224 608h8v8h-8zM232 608h8v8h-8zM240 608h8v8h-8zM248 608h8v8h-8zM256 608h8v8h-8zM264 608h8v8h-8zM272 608h8v8h-8zM288 608h8v8h-8zM296 608h8v8h-8zM304 608h8v8h-8zM312 608h8v8h-8zM320 608h8v8h-8zM328 608h8v8h-8zM280 616h8v8h-8zM280 624h8v8h-8zM216 632h8v8h-8zM224 632h8v8h-8zM232 632h8v8h-8zM240 632h8v8h-8zM248 632h8v8h-8zM256 632h8v8h-8zM264 632h8v8h-8zM272 632h8v8h-8zM288 632h8v8h-8zM296 632h8v8h-8zM304 632h8v8h-8zM312 632h8v8h-8zM320 632h8v8h-8zM328 632h8v8h-8zM280 640h8v8h-8zM216 648h8v8h-8zM224 648h8v8h-8zM280 648h8v8h-8zM216 656h8v8h-8zM224 656h8v8h-8zM232 656h8v8h-8zM240 656h8v8h-8zM248 656h8v8h-8zM256 656h8v8h-8zM264 656h8v8h-8zM272 656h8v8h-8zM320 656h8v8h-8zM280 664h8v8h-8zM232 680h8v8h-8zM280 680h8v8h-8zM312 680h8v8h-8zM320 680h8v8h-8zM240 696h8v8h-8zM232 704h8v8h-8zM240 704h8v8h-8zM248 704h8v8h-8zM280 704h8v8h-8zM280 712h8v8h-8zM216 720h8v8h-8zM224 720h8v8h-8zM232 720h8v8h-8zM240 720h8v8h-8zM248 720h8v8h-8zM256 720h8v8h-8zM264 720h8v8h-8zM272 720h8v8h-8zM296 720h8v8h-8zM232 728h8v8h-8zM280 728h8v8h-8zM296 728h8v8h-8zM280 736h8v8h-8zM216 744h8v8h-8zM224 744h8v8h-8zM232 744h8v8h-8zM240 744h8v8h-8zM248 744h8v8h-8zM256 744h8v8h-8zM264 744h8v8h-8zM272 744h8v8h-8zM288 744h8v8h-8zM296 744h8v8h-8zM304 744h8v8h-8zM312 744h8v8h-8zM320 744h8v8h-8zM328 744h8v8h-8zM232 752h8v8h-8zM264 752h8v8h-8zM280 752h8v8h-8zM248 760h8v8h-8zM280 760h8v8h-8zM216 768h8v8h-8zM224 768h8v8h-8zM232 768h8v8h-8zM240 768h8v8h-8zM248 768h8v8h-8zM256 768h8v8h-8zM264 768h8v8h-8zM272 768h8v8h-8zM288 768h8v8h-8zM296 768h8v8h-8zM304 768h8v8h-8zM312 768h8v8h-8zM320 768h8v8h-8zM328 768h8v8h-8zM280 776h8v8h-8zM280 784h8v8h-8zM216 792h8v8h-8zM224 792h8v8h-8zM232 792h8v8h-8zM240 792h8v8h-8zM248 792h8v8h-8zM256 792h8v8h-8zM264 792h8v8h-8zM272 792h8v8h-8zM288 792h8v8h-8zM296 792h8v8h-8zM304 792h8v8h-8zM312 792h8v8h-8zM320 792h8v8h-8zM328 792h8v8h-8zM216 816h8v8h-8zM224 816h8v8h-8zM232 816h8v8h-8zM240 816h8v8h-8zM248 816h8v8h-8zM256 816h8v8h-8zM264 816h8v8h-8zM272 816h8v8h-8zM288 816h8v8h-8zM296 816h8v8h-8zM304 816h8v8h-8zM312 816h8v8h-8zM320 816h8v8h-8zM328 816h8v8h-8zM280 824h8v8h-8zM248 832h8v8h-8zM280 832h8v8h-8zM216 840h8v8h-8zM224 840h8v8h-8zM232 840h8v8h-8zM240 840h8v8h-8zM248 840h8v8h-8zM256 840h8v8h-8zM264 840h8v8h-8zM272 840h8v8h-8zM328 840h8v8h-8zM280 864h8v8h-8zM320 864h8v8h-8zM280 872h8v8h-8zM216 880h8v8h-8zM240 880h8v8h-8zM280 888h8v8h-8zM304 888h8v8h-8zM280 896h8v8h-8zM216 904h8v8h-8zM224 904h8v8h-8zM232 904h8v8h-8zM240 904h8v8h-8zM248 904h8v8h-8zM256 904h8v8h-8zM264 904h8v8h-8zM272 904h8v8h-8zM248 912h8v8h-8zM280 912h8v8h-8zM280 920h8v8h-8zM216 928h8v8h-8zM224 928h8v8h-8zM232 928h8v8h-8zM240 928h8v8h-8zM248 928h8v8h-8zM256 928h8v8h-8zM264 928h8v8h-8zM272 928h8v8h-8zM288 928h8v8h-8zM296 928h8v8h-8zM304 928h8v8h-8zM312 928h8v8h-8zM320 928h8v8h-8zM328 928h8v8h-8zM280 936h8v8h-8zM288 936h8v8h-8zM288 168h8v8h-8zM296 168h8v8h-8zM304 168h8v8h-8zM720 192h8v8h-8zM728 192h8v8h-8zM736 192h8v8h-8zM744 192h8v8h-8zM752 192h8v8h-8zM760 192h8v8h-8zM720 216h8v8h-8zM728 216h8v8h-8zM736 216h8v8h-8zM744 216h8v8h-8zM752 216h8v8h-8zM760 216h8v8h-8zM752 232h8v8h-8zM720 240h8v8h-8zM728 240h8v8h-8zM736 240h8v8h-8zM744 240h8v8h-8zM752 240h8v8h-8zM760 240h8v8h-8zM720 264h8v8h-8zM728 264h8v8h-8zM736 264h8v8h-8zM744 264h8v8h-8zM752 264h8v8h-8zM760 264h8v8h-8zM720 280h8v8h-8zM752 280h8v8h-8zM720 288h8v8h-8zM728 288h8v8h-8zM736 288h8v8h-8zM744 288h8v8h-8zM752 288h8v8h-8zM760 288h8v8h-8zM744 304h8v8h-8zM760 304h8v8h-8zM728 328h8v8h-8zM752 328h8v8h-8zM760 328h8v8h-8zM720 336h8v8h-8zM728 336h8v8h-8zM720 352h8v8h-8zM728 352h8v8h-8zM736 352h8v8h-8zM744 352h8v8h-8zM752 352h8v8h-8zM760 352h8v8h-8zM736 360h8v8h-8zM720 376h8v8h-8zM728 376h8v8h-8zM736 376h8v8h-8zM744 376h8v8h-8zM752 376h8v8h-8zM760 376h8v8h-8zM720 400h8v8h-8zM728 400h8v8h-8zM736 400h8v8h-8zM744 400h8v8h-8zM752 400h8v8h-8zM760 400h8v8h-8zM720 424h8v8h-8zM728 424h8v8h-8zM736 424h8v8h-8zM744 424h8v8h-8zM752 424h8v8h-8zM760 424h8v8h-8zM720 448h8v8h-8zM728 448h8v8h-8zM736 448h8v8h-8zM744 448h8v8h-8zM752 448h8v8h-8zM760 448h8v8h-8zM752 464h8v8h-8zM720 472h8v8h-8zM728 472h8v8h-8zM736 472h8v8h-8zM744 472h8v8h-8zM752 472h8v8h-8zM760 472h8v8h-8zM760 488h8v8h-8zM760 512h8v8h-8zM744 520h8v8h-8zM720 536h8v8h-8zM728 536h8v8h-8zM736 536h8v8h-8zM744 536h8v8h-8zM752 536h8v8h-8zM760 536h8v8h-8zM720 560h8v8h-8zM728 560h8v8h-8zM736 560h8v8h-8zM744 560h8v8h-8zM752 560h8v8h-8zM760 560h8v8h-8zM720 584h8v8h-8zM728 584h8v8h-8zM736 584h8v8h-8zM744 584h8v8h-8zM752 584h8v8h-8zM760 584h8v8h-8zM752 600h8v8h-8zM720 608h8v8h-8zM728 608h8v8h-8zM736 608h8v8h-8zM744 608h8v8h-8zM752 608h8v8h-8zM760 608h8v8h-8zM720 632h8v8h-8zM728 632h8v8h-8zM736 632h8v8h-8zM744 632h8v8h-8zM752 632h8v8h-8zM760 632h8v8h-8zM720 648h8v8h-8zM744 648h8v8h-8zM752 648h8v8h-8zM760 648h8v8h-8zM720 656h8v8h-8zM728 656h8v8h-8zM736 656h8v8h-8zM744 656h8v8h-8zM752 656h8v8h-8zM760 656h8v8h-8zM760 672h8v8h-8zM720 696h8v8h-8zM736 696h8v8h-8zM752 696h8v8h-8zM760 696h8v8h-8zM736 704h8v8h-8zM752 704h8v8h-8zM720 720h8v8h-8zM728 720h8v8h-8zM736 720h8v8h-8zM744 720h8v8h-8zM752 720h8v8h-8zM760 720h8v8h-8zM720 744h8v8h-8zM728 744h8v8h-8zM736 744h8v8h-8zM744 744h8v8h-8zM752 744h8v8h-8zM760 744h8v8h-8zM720 768h8v8h-8zM728 768h8v8h-8zM736 768h8v8h-8zM744 768h8v8h-8zM752 768h8v8h-8zM760 768h8v8h-8zM736 784h8v8h-8zM720 792h8v8h-8zM728 792h8v8h-8zM736 792h8v8h-8zM744 792h8v8h-8zM752 792h8v8h-8zM760 792h8v8h-8zM720 816h8v8h-8zM728 816h8v8h-8zM736 816h8v8h-8zM744 816h8v8h-8zM752 816h8v8h-8zM760 816h8v8h-8zM736 824h8v8h-8zM720 840h8v8h-8zM728 840h8v8h-8zM736 840h8v8h-8zM744 840h8v8h-8zM752 840h8v8h-8zM760 840h8v8h-8zM744 856h8v8h-8zM760 856h8v8h-8zM752 880h8v8h-8zM760 880h8v8h-8zM728 888h8v8h-8zM736 888h8v8h-8zM720 904h8v8h-8zM728 904h8v8h-8zM736 904h8v8h-8zM744 904h8v8h-8zM752 904h8v8h-8zM760 904h8v8h-8zM720 928h8v8h-8zM728 928h8v8h-8zM736 928h8v8h-8zM744 928h8v8h-8zM752 928h8v8h-8zM760 928h8v8h-8zM808 176h8v8h-8zM784 192h8v8h-8zM792 192h8v8h-8zM800 192h8v8h-8zM808 192h8v8h-8zM816 192h8v8h-8zM824 192h8v8h-8zM816 200h8v8h-8zM784 216h8v8h-8zM792 216h8v8h-8zM800 216h8v8h-8zM808 216h8v8h-8zM816 216h8v8h-8zM824 216h8v8h-8zM784 240h8v8h-8zM792 240h8v8h-8zM800 240h8v8h-8zM808 240h8v8h-8zM816 240h8v8h-8zM824 240h8v8h-8zM784 264h8v8h-8zM792 264h8v8h-8zM800 264h8v8h-8zM808 264h8v8h-8zM816 264h8v8h-8zM824 264h8v8h-8zM784 288h8v8h-8zM792 288h8v8h-8zM800 288h8v8h-8zM808 288h8v8h-8zM816 288h8v8h-8zM824 288h8v8h-8zM824 304h8v8h-8zM824 320h8v8h-8zM800 328h8v8h-8zM816 328h8v8h-8zM824 328h8v8h-8zM808 336h8v8h-8zM784 352h8v8h-8zM792 352h8v8h-8zM800 352h8v8h-8zM808 352h8v8h-8zM816 352h8v8h-8zM824 352h8v8h-8zM784 376h8v8h-8zM792 376h8v8h-8zM800 376h8v8h-8zM808 376h8v8h-8zM816 376h8v8h-8zM824 376h8v8h-8zM784 384h8v8h-8zM816 392h8v8h-8zM784 400h8v8h-8zM792 400h8v8h-8zM800 400h8v8h-8zM808 400h8v8h-8zM816 400h8v8h-8zM824 400h8v8h-8zM800 416h8v8h-8zM784 424h8v8h-8zM792 424h8v8h-8zM800 424h8v8h-8zM808 424h8v8h-8zM816 424h8v8h-8zM824 424h8v8h-8zM800 440h8v8h-8zM816 440h8v8h-8zM784 448h8v8h-8zM792 448h8v8h-8zM800 448h8v8h-8zM808 448h8v8h-8zM816 448h8v8h-8zM824 448h8v8h-8zM784 472h8v8h-8zM792 472h8v8h-8zM800 472h8v8h-8zM808 472h8v8h-8zM816 472h8v8h-8zM824 472h8v8h-8zM824 512h8v8h-8zM792 520h8v8h-8zM784 536h8v8h-8zM792 536h8v8h-8zM800 536h8v8h-8zM808 536h8v8h-8zM816 536h8v8h-8zM824 536h8v8h-8zM784 544h8v8h-8zM784 560h8v8h-8zM792 560h8v8h-8zM800 560h8v8h-8zM808 560h8v8h-8zM816 560h8v8h-8zM824 560h8v8h-8zM792 568h8v8h-8zM824 568h8v8h-8zM784 584h8v8h-8zM792 584h8v8h-8zM800 584h8v8h-8zM808 584h8v8h-8zM816 584h8v8h-8zM824 584h8v8h-8zM784 608h8v8h-8zM792 608h8v8h-8zM800 608h8v8h-8zM808 608h8v8h-8zM816 608h8v8h-8zM824 608h8v8h-8zM800 624h8v8h-8zM784 632h8v8h-8zM792 632h8v8h-8zM800 632h8v8h-8zM808 632h8v8h-8zM816 632h8v8h-8zM824 632h8v8h-8zM784 656h8v8h-8zM792 656h8v8h-8zM800 656h8v8h-8zM808 656h8v8h-8zM816 656h8v8h-8zM824 656h8v8h-8zM784 696h8v8h-8zM824 696h8v8h-8zM792 704h8v8h-8zM784 720h8v8h-8zM792 720h8v8h-8zM800 720h8v8h-8zM808 720h8v8h-8zM816 720h8v8h-8zM824 720h8v8h-8zM816 728h8v8h-8zM784 744h8v8h-8zM792 744h8v8h-8zM800 744h8v8h-8zM808 744h8v8h-8zM816 744h8v8h-8zM824 744h8v8h-8zM816 752h8v8h-8zM784 768h8v8h-8zM792 768h8v8h-8zM800 768h8v8h-8zM808 768h8v8h-8zM816 768h8v8h-8zM824 768h8v8h-8zM792 776h8v8h-8zM784 792h8v8h-8zM792 792h8v8h-8zM800 792h8v8h-8zM808 792h8v8h-8zM816 792h8v8h-8zM824 792h8v8h-8zM808 808h8v8h-8zM784 816h8v8h-8zM792 816h8v8h-8zM800 816h8v8h-8zM808 816h8v8h-8zM816 816h8v8h-8zM824 816h8v8h-8zM784 840h8v8h-8zM792 840h8v8h-8zM800 840h8v8h-8zM808 840h8v8h-8zM816 840h8v8h-8zM824 840h8v8h-8zM824 856h8v8h-8zM784 864h8v8h-8zM808 880h8v8h-8zM816 880h8v8h-8zM824 880h8v8h-8zM784 904h8v8h-8zM792 904h8v8h-8zM800 904h8v8h-8zM808 904h8v8h-8zM816 904h8v8h-8zM824 904h8v8h-8zM808 912h8v8h-8zM784 928h8v8h-8zM792 928h8v8h-8zM800 928h8v8h-8zM808 928h8v8h-8zM816 928h8v8h-8zM824 928h8v8h-8zM864 176h8v8h-8zM872 176h8v8h-8zM840 192h8v8h-8zM848 192h8v8h-8zM856 192h8v8h-8zM864 192h8v8h-8zM872 192h8v8h-8zM880 192h8v8h-8zM840 216h8v8h-8zM848 216h8v8h-8zM856 216h8v8h-8zM864 216h8v8h-8zM872 216h8v8h-8zM880 216h8v8h-8zM880 224h8v8h-8zM840 240h8v8h-8zM848 240h8v8h-8zM856 240h8v8h-8zM864 240h8v8h-8zM872 240h8v8h-8zM880 240h8v8h-8zM848 256h8v8h-8zM840 264h8v8h-8zM848 264h8v8h-8zM856 264h8v8h-8zM864 264h8v8h-8zM872 264h8v8h-8zM880 264h8v8h-8zM864 280h8v8h-8zM840 288h8v8h-8zM848 288h8v8h-8zM856 288h8v8h-8zM864 288h8v8h-8zM872 288h8v8h-8zM880 288h8v8h-8zM864 328h8v8h-8zM840 336h8v8h-8zM856 336h8v8h-8zM840 352h8v8h-8zM848 352h8v8h-8zM856 352h8v8h-8zM864 352h8v8h-8zM872 352h8v8h-8zM880 352h8v8h-8zM840 360h8v8h-8zM840 376h8v8h-8zM848 376h8v8h-8zM856 376h8v8h-8zM864 376h8v8h-8zM872 376h8v8h-8zM880 376h8v8h-8zM840 400h8v8h-8zM848 400h8v8h-8zM856 400h8v8h-8zM864 400h8v8h-8zM872 400h8v8h-8zM880 400h8v8h-8zM864 416h8v8h-8zM840 424h8v8h-8zM848 424h8v8h-8zM856 424h8v8h-8zM864 424h8v8h-8zM872 424h8v8h-8zM880 424h8v8h-8zM848 440h8v8h-8zM840 448h8v8h-8zM848 448h8v8h-8zM856 448h8v8h-8zM864 448h8v8h-8zM872 448h8v8h-8zM880 448h8v8h-8zM864 464h8v8h-8zM872 464h8v8h-8zM840 472h8v8h-8zM848 472h8v8h-8zM856 472h8v8h-8zM864 472h8v8h-8zM872 472h8v8h-8zM880 472h8v8h-8zM880 488h8v8h-8zM880 512h8v8h-8zM864 520h8v8h-8zM840 536h8v8h-8zM848 536h8v8h-8zM856 536h8v8h-8zM864 536h8v8h-8zM872 536h8v8h-8zM880 536h8v8h-8zM840 560h8v8h-8zM848 560h8v8h-8zM856 560h8v8h-8zM864 560h8v8h-8zM872 560h8v8h-8zM880 560h8v8h-8zM840 584h8v8h-8zM848 584h8v8h-8zM856 584h8v8h-8zM864 584h8v8h-8zM872 584h8v8h-8zM880 584h8v8h-8zM840 608h8v8h-8zM848 608h8v8h-8zM856 608h8v8h-8zM864 608h8v8h-8zM872 608h8v8h-8zM880 608h8v8h-8zM840 632h8v8h-8zM848 632h8v8h-8zM856 632h8v8h-8zM864 632h8v8h-8zM872 632h8v8h-8zM880 632h8v8h-8zM856 648h8v8h-8zM864 648h8v8h-8zM872 648h8v8h-8zM840 656h8v8h-8zM848 656h8v8h-8zM856 656h8v8h-8zM864 656h8v8h-8zM872 656h8v8h-8zM880 656h8v8h-8zM856 672h8v8h-8zM864 696h8v8h-8zM880 696h8v8h-8zM840 720h8v8h-8zM848 720h8v8h-8zM856 720h8v8h-8zM864 720h8v8h-8zM872 720h8v8h-8zM880 720h8v8h-8zM840 744h8v8h-8zM848 744h8v8h-8zM856 744h8v8h-8zM864 744h8v8h-8zM872 744h8v8h-8zM880 744h8v8h-8zM848 752h8v8h-8zM840 768h8v8h-8zM848 768h8v8h-8zM856 768h8v8h-8zM864 768h8v8h-8zM872 768h8v8h-8zM880 768h8v8h-8zM840 792h8v8h-8zM848 792h8v8h-8zM856 792h8v8h-8zM864 792h8v8h-8zM872 792h8v8h-8zM880 792h8v8h-8zM856 808h8v8h-8zM840 816h8v8h-8zM848 816h8v8h-8zM856 816h8v8h-8zM864 816h8v8h-8zM872 816h8v8h-8zM880 816h8v8h-8zM856 832h8v8h-8zM840 840h8v8h-8zM848 840h8v8h-8zM856 840h8v8h-8zM864 840h8v8h-8zM872 840h8v8h-8zM880 840h8v8h-8zM880 856h8v8h-8zM856 864h8v8h-8zM840 880h8v8h-8zM872 880h8v8h-8zM840 904h8v8h-8zM848 904h8v8h-8zM856 904h8v8h-8zM864 904h8v8h-8zM872 904h8v8h-8zM880 904h8v8h-8zM840 912h8v8h-8zM848 912h8v8h-8zM872 920h8v8h-8zM840 928h8v8h-8zM848 928h8v8h-8zM856 928h8v8h-8zM864 928h8v8h-8zM872 928h8v8h-8zM880 928h8v8h-8zM1400 328h8v8h-8zM1512 424h8v8h-8z"/><path fill="#3996e1" d="M216 184h8v8h-8z"/><path fill="#489fe1" d="M224 184h8v8h-8z"/><path fill="#63aee7" d="M232 184h8v8h-8z"/><path fill="#54a5e4" d="M240 184h8v8h-8z"/><path fill="#4b9fe4" d="M248 184h8v8h-8zM256 184h8v8h-8z"/><path fill="#75b4ea" d="M264 184h8v8h-8z"/><path fill="#69aee7" d="M272 184h8v8h-8z"/><path fill="#75b1de" d="M280 184h8v8h-8zM216 192h8v8h-8zM224 192h8v8h-8zM232 192h8v8h-8zM240 192h8v8h-8zM248 192h8v8h-8zM256 192h8v8h-8zM264 192h8v8h-8zM272 192h8v8h-8z"/><path fill="#d5d5db" d="M288 184h8v8h-8zM312 184h8v8h-8zM312 200h8v8h-8zM304 224h8v8h-8zM296 248h8v8h-8zM216 272h8v8h-8zM296 280h8v8h-8zM216 320h8v8h-8zM240 320h8v8h-8zM264 320h8v8h-8zM240 344h8v8h-8zM248 344h8v8h-8zM304 344h8v8h-8zM240 384h8v8h-8zM296 392h8v8h-8zM312 392h8v8h-8zM312 416h8v8h-8zM320 480h8v8h-8zM232 504h8v8h-8zM256 504h8v8h-8zM240 528h8v8h-8zM256 552h8v8h-8zM272 552h8v8h-8zM320 552h8v8h-8zM288 576h8v8h-8zM264 600h8v8h-8zM264 616h8v8h-8zM232 624h8v8h-8zM240 664h8v8h-8zM248 664h8v8h-8zM240 688h8v8h-8zM304 688h8v8h-8zM312 712h8v8h-8zM288 736h8v8h-8zM216 760h8v8h-8zM304 760h8v8h-8zM296 776h8v8h-8zM224 824h8v8h-8zM240 824h8v8h-8zM312 824h8v8h-8zM264 872h8v8h-8zM320 872h8v8h-8zM224 920h8v8h-8zM256 920h8v8h-8zM312 920h8v8h-8zM216 944h8v8h-8zM224 944h8v8h-8zM728 184h8v8h-8zM736 392h8v8h-8zM720 480h8v8h-8zM728 552h8v8h-8zM720 640h8v8h-8zM728 640h8v8h-8zM744 712h8v8h-8zM736 800h8v8h-8zM736 872h8v8h-8zM736 944h8v8h-8zM800 320h8v8h-8zM816 344h8v8h-8zM784 368h8v8h-8zM784 392h8v8h-8zM792 504h8v8h-8zM784 528h8v8h-8zM784 552h8v8h-8zM800 592h8v8h-8zM808 592h8v8h-8zM800 664h8v8h-8zM800 776h8v8h-8zM808 848h8v8h-8zM864 184h8v8h-8zM840 200h8v8h-8zM840 208h8v8h-8zM848 296h8v8h-8zM864 296h8v8h-8zM840 344h8v8h-8zM872 344h8v8h-8zM872 392h8v8h-8zM840 432h8v8h-8zM880 432h8v8h-8zM856 528h8v8h-8zM864 528h8v8h-8zM872 664h8v8h-8zM856 688h8v8h-8zM856 712h8v8h-8zM864 760h8v8h-8zM864 776h8v8h-8zM864 872h8v8h-8zM848 944h8v8h-8zM864 944h8v8h-8z"/><path fill="#dedee1" d="M304 184h8v8h-8zM216 224h8v8h-8zM272 232h8v8h-8zM312 256h8v8h-8zM288 272h8v8h-8zM328 272h8v8h-8zM216 296h8v8h-8zM312 296h8v8h-8zM312 304h8v8h-8zM320 304h8v8h-8zM288 320h8v8h-8zM312 320h8v8h-8zM328 320h8v8h-8zM256 344h8v8h-8zM296 344h8v8h-8zM224 368h8v8h-8zM256 368h8v8h-8zM264 368h8v8h-8zM312 368h8v8h-8zM224 384h8v8h-8zM272 384h8v8h-8zM296 384h8v8h-8zM328 384h8v8h-8zM224 408h8v8h-8zM240 408h8v8h-8zM296 408h8v8h-8zM304 432h8v8h-8zM216 456h8v8h-8zM232 456h8v8h-8zM312 456h8v8h-8zM256 480h8v8h-8zM224 504h8v8h-8zM296 504h8v8h-8zM216 528h8v8h-8zM256 528h8v8h-8zM264 528h8v8h-8zM288 528h8v8h-8zM296 544h8v8h-8zM288 552h8v8h-8zM312 568h8v8h-8zM232 576h8v8h-8zM320 592h8v8h-8zM272 600h8v8h-8zM296 600h8v8h-8zM312 600h8v8h-8zM216 616h8v8h-8zM328 624h8v8h-8zM320 648h8v8h-8zM216 664h8v8h-8zM232 664h8v8h-8zM296 688h8v8h-8zM240 712h8v8h-8zM296 712h8v8h-8zM320 728h8v8h-8zM296 752h8v8h-8zM320 760h8v8h-8zM232 776h8v8h-8zM312 776h8v8h-8zM248 800h8v8h-8zM272 800h8v8h-8zM320 800h8v8h-8zM232 824h8v8h-8zM248 824h8v8h-8zM296 832h8v8h-8zM248 848h8v8h-8zM312 848h8v8h-8zM256 856h8v8h-8zM328 856h8v8h-8zM304 896h8v8h-8zM320 896h8v8h-8zM288 920h8v8h-8zM248 936h8v8h-8zM256 944h8v8h-8zM296 944h8v8h-8zM744 184h8v8h-8zM720 208h8v8h-8zM736 208h8v8h-8zM744 232h8v8h-8zM744 248h8v8h-8zM728 296h8v8h-8zM744 320h8v8h-8zM736 344h8v8h-8zM744 368h8v8h-8zM720 384h8v8h-8zM736 432h8v8h-8zM752 432h8v8h-8zM752 576h8v8h-8zM736 640h8v8h-8zM752 688h8v8h-8zM728 736h8v8h-8zM736 760h8v8h-8zM744 784h8v8h-8zM752 824h8v8h-8zM720 856h8v8h-8zM752 896h8v8h-8zM728 944h8v8h-8zM744 944h8v8h-8zM808 184h8v8h-8zM808 296h8v8h-8zM808 320h8v8h-8zM816 432h8v8h-8zM784 480h8v8h-8zM784 504h8v8h-8zM808 576h8v8h-8zM816 576h8v8h-8zM808 600h8v8h-8zM816 664h8v8h-8zM792 712h8v8h-8zM800 736h8v8h-8zM808 824h8v8h-8zM816 824h8v8h-8zM784 896h8v8h-8zM800 920h8v8h-8zM816 920h8v8h-8zM848 232h8v8h-8zM864 232h8v8h-8zM864 256h8v8h-8zM848 320h8v8h-8zM864 320h8v8h-8zM856 368h8v8h-8zM872 368h8v8h-8zM880 408h8v8h-8zM840 416h8v8h-8zM840 480h8v8h-8zM840 504h8v8h-8zM840 552h8v8h-8zM864 552h8v8h-8zM872 576h8v8h-8zM872 592h8v8h-8zM864 600h8v8h-8zM880 600h8v8h-8zM848 664h8v8h-8zM864 672h8v8h-8zM864 712h8v8h-8zM872 712h8v8h-8zM848 776h8v8h-8zM840 824h8v8h-8zM840 872h8v8h-8zM872 896h8v8h-8zM848 936h8v8h-8z"/><path fill="#d8d8db" d="M320 184h8v8h-8zM304 200h8v8h-8zM224 208h8v8h-8zM248 208h8v8h-8zM296 208h8v8h-8zM320 208h8v8h-8zM328 208h8v8h-8zM240 248h8v8h-8zM304 256h8v8h-8zM328 256h8v8h-8zM256 272h8v8h-8zM288 296h8v8h-8zM312 344h8v8h-8zM328 344h8v8h-8zM320 384h8v8h-8zM264 392h8v8h-8zM304 408h8v8h-8zM264 416h8v8h-8zM304 416h8v8h-8zM288 432h8v8h-8zM296 432h8v8h-8zM328 432h8v8h-8zM296 440h8v8h-8zM248 456h8v8h-8zM328 456h8v8h-8zM216 480h8v8h-8zM288 480h8v8h-8zM320 504h8v8h-8zM296 528h8v8h-8zM264 552h8v8h-8zM312 552h8v8h-8zM312 576h8v8h-8zM240 592h8v8h-8zM288 672h8v8h-8zM320 688h8v8h-8zM304 712h8v8h-8zM248 736h8v8h-8zM256 736h8v8h-8zM312 760h8v8h-8zM328 760h8v8h-8zM296 800h8v8h-8zM256 808h8v8h-8zM296 808h8v8h-8zM216 824h8v8h-8zM264 824h8v8h-8zM320 824h8v8h-8zM256 848h8v8h-8zM272 848h8v8h-8zM304 848h8v8h-8zM272 872h8v8h-8zM304 872h8v8h-8zM328 872h8v8h-8zM296 920h8v8h-8zM320 920h8v8h-8zM328 920h8v8h-8zM232 944h8v8h-8zM736 248h8v8h-8zM720 272h8v8h-8zM752 272h8v8h-8zM744 296h8v8h-8zM728 344h8v8h-8zM752 456h8v8h-8zM744 480h8v8h-8zM728 528h8v8h-8zM744 552h8v8h-8zM720 664h8v8h-8zM736 664h8v8h-8zM736 736h8v8h-8zM744 736h8v8h-8zM744 776h8v8h-8zM736 896h8v8h-8zM800 184h8v8h-8zM792 272h8v8h-8zM816 296h8v8h-8zM800 392h8v8h-8zM792 432h8v8h-8zM808 432h8v8h-8zM792 456h8v8h-8zM784 576h8v8h-8zM808 640h8v8h-8zM792 688h8v8h-8zM792 736h8v8h-8zM808 752h8v8h-8zM784 800h8v8h-8zM800 824h8v8h-8zM808 944h8v8h-8zM872 248h8v8h-8zM848 272h8v8h-8zM840 296h8v8h-8zM840 320h8v8h-8zM848 344h8v8h-8zM864 368h8v8h-8zM840 408h8v8h-8zM872 408h8v8h-8zM856 504h8v8h-8zM848 528h8v8h-8zM840 664h8v8h-8zM840 688h8v8h-8zM864 800h8v8h-8zM872 800h8v8h-8zM856 872h8v8h-8zM864 920h8v8h-8z"/><path fill="#d2d2d8" d="M328 184h8v8h-8zM328 200h8v8h-8zM240 208h8v8h-8zM328 224h8v8h-8zM232 248h8v8h-8zM312 248h8v8h-8zM328 248h8v8h-8zM232 296h8v8h-8zM216 344h8v8h-8zM232 344h8v8h-8zM216 368h8v8h-8zM224 392h8v8h-8zM320 408h8v8h-8zM320 432h8v8h-8zM256 456h8v8h-8zM272 456h8v8h-8zM296 456h8v8h-8zM320 456h8v8h-8zM328 480h8v8h-8zM216 504h8v8h-8zM304 504h8v8h-8zM312 528h8v8h-8zM248 552h8v8h-8zM296 552h8v8h-8zM328 552h8v8h-8zM304 600h8v8h-8zM224 616h8v8h-8zM256 616h8v8h-8zM216 640h8v8h-8zM256 664h8v8h-8zM272 664h8v8h-8zM256 688h8v8h-8zM272 688h8v8h-8zM216 736h8v8h-8zM240 736h8v8h-8zM296 736h8v8h-8zM216 784h8v8h-8zM224 784h8v8h-8zM296 784h8v8h-8zM312 872h8v8h-8zM312 896h8v8h-8zM240 920h8v8h-8zM312 944h8v8h-8zM728 248h8v8h-8zM752 296h8v8h-8zM736 480h8v8h-8zM728 688h8v8h-8zM720 736h8v8h-8zM752 736h8v8h-8zM752 872h8v8h-8zM752 920h8v8h-8zM792 184h8v8h-8zM800 296h8v8h-8zM792 320h8v8h-8zM784 344h8v8h-8zM808 344h8v8h-8zM784 624h8v8h-8zM792 640h8v8h-8zM784 664h8v8h-8zM792 896h8v8h-8zM840 184h8v8h-8zM864 272h8v8h-8zM872 320h8v8h-8zM840 456h8v8h-8zM872 504h8v8h-8zM864 664h8v8h-8zM864 688h8v8h-8zM856 760h8v8h-8zM856 824h8v8h-8zM848 872h8v8h-8zM864 896h8v8h-8z"/><path fill="#99c0db" d="M280 192h8v8h-8z"/><path fill="#f6f6f6" d="M216 200h8v8h-8zM240 224h8v8h-8zM216 312h8v8h-8zM240 312h8v8h-8zM248 312h8v8h-8zM304 312h8v8h-8zM256 336h8v8h-8zM296 336h8v8h-8zM272 344h8v8h-8zM256 360h8v8h-8zM256 440h8v8h-8zM272 440h8v8h-8zM264 464h8v8h-8zM272 464h8v8h-8zM312 496h8v8h-8zM328 496h8v8h-8zM216 520h8v8h-8zM288 520h8v8h-8zM224 544h8v8h-8zM240 568h8v8h-8zM240 648h8v8h-8zM304 648h8v8h-8zM288 680h8v8h-8zM272 704h8v8h-8zM288 704h8v8h-8zM224 728h8v8h-8zM248 728h8v8h-8zM272 736h8v8h-8zM256 752h8v8h-8zM216 808h8v8h-8zM240 832h8v8h-8zM288 832h8v8h-8zM256 864h8v8h-8zM264 888h8v8h-8zM288 888h8v8h-8zM240 912h8v8h-8zM224 936h8v8h-8zM752 224h8v8h-8zM736 280h8v8h-8zM744 336h8v8h-8zM760 368h8v8h-8zM752 440h8v8h-8zM736 464h8v8h-8zM744 496h8v8h-8zM752 496h8v8h-8zM736 520h8v8h-8zM752 552h8v8h-8zM728 648h8v8h-8zM728 728h8v8h-8zM744 888h8v8h-8zM760 912h8v8h-8zM728 936h8v8h-8zM816 224h8v8h-8zM824 232h8v8h-8zM816 248h8v8h-8zM792 312h8v8h-8zM792 336h8v8h-8zM784 360h8v8h-8zM808 368h8v8h-8zM784 416h8v8h-8zM824 432h8v8h-8zM800 520h8v8h-8zM800 648h8v8h-8zM784 704h8v8h-8zM824 736h8v8h-8zM784 784h8v8h-8zM816 784h8v8h-8zM792 832h8v8h-8zM800 864h8v8h-8zM784 888h8v8h-8zM792 888h8v8h-8zM800 888h8v8h-8zM840 280h8v8h-8zM848 280h8v8h-8zM872 280h8v8h-8zM872 336h8v8h-8zM880 344h8v8h-8zM864 360h8v8h-8zM880 360h8v8h-8zM848 464h8v8h-8zM848 496h8v8h-8zM840 520h8v8h-8zM848 520h8v8h-8zM872 544h8v8h-8zM840 568h8v8h-8zM872 680h8v8h-8zM848 704h8v8h-8zM856 728h8v8h-8zM880 728h8v8h-8zM872 752h8v8h-8zM880 776h8v8h-8zM880 784h8v8h-8zM880 848h8v8h-8zM848 888h8v8h-8zM856 888h8v8h-8zM864 912h8v8h-8zM1384 256h8v8h-8zM1320 280h8v8h-8zM1440 352h8v8h-8zM1216 928h8v8h-8z"/><path fill="#e1e1e4" d="M240 200h8v8h-8zM320 200h8v8h-8zM216 208h8v8h-8zM232 224h8v8h-8zM264 224h8v8h-8zM296 224h8v8h-8zM224 232h8v8h-8zM256 232h8v8h-8zM320 232h8v8h-8zM232 256h8v8h-8zM296 256h8v8h-8zM248 280h8v8h-8zM328 304h8v8h-8zM320 328h8v8h-8zM256 384h8v8h-8zM248 392h8v8h-8zM320 392h8v8h-8zM248 408h8v8h-8zM224 416h8v8h-8zM224 432h8v8h-8zM312 432h8v8h-8zM248 440h8v8h-8zM304 456h8v8h-8zM248 464h8v8h-8zM272 480h8v8h-8zM248 488h8v8h-8zM328 504h8v8h-8zM296 512h8v8h-8zM304 528h8v8h-8zM304 544h8v8h-8zM320 544h8v8h-8zM272 576h8v8h-8zM320 576h8v8h-8zM328 576h8v8h-8zM296 592h8v8h-8zM312 592h8v8h-8zM240 624h8v8h-8zM320 624h8v8h-8zM224 640h8v8h-8zM272 640h8v8h-8zM312 664h8v8h-8zM296 672h8v8h-8zM320 672h8v8h-8zM320 696h8v8h-8zM232 712h8v8h-8zM328 712h8v8h-8zM304 728h8v8h-8zM312 728h8v8h-8zM304 736h8v8h-8zM224 752h8v8h-8zM320 752h8v8h-8zM232 760h8v8h-8zM256 760h8v8h-8zM296 760h8v8h-8zM264 776h8v8h-8zM304 776h8v8h-8zM256 784h8v8h-8zM264 784h8v8h-8zM320 784h8v8h-8zM328 824h8v8h-8zM216 832h8v8h-8zM304 856h8v8h-8zM320 856h8v8h-8zM296 912h8v8h-8zM216 920h8v8h-8zM240 936h8v8h-8zM256 936h8v8h-8zM328 936h8v8h-8zM240 944h8v8h-8zM720 224h8v8h-8zM728 224h8v8h-8zM744 224h8v8h-8zM720 232h8v8h-8zM728 272h8v8h-8zM736 296h8v8h-8zM752 368h8v8h-8zM752 408h8v8h-8zM728 456h8v8h-8zM736 504h8v8h-8zM736 552h8v8h-8zM720 576h8v8h-8zM720 600h8v8h-8zM728 616h8v8h-8zM728 624h8v8h-8zM752 640h8v8h-8zM752 664h8v8h-8zM736 752h8v8h-8zM744 760h8v8h-8zM720 784h8v8h-8zM720 800h8v8h-8zM728 808h8v8h-8zM720 824h8v8h-8zM728 848h8v8h-8zM728 872h8v8h-8zM720 944h8v8h-8zM800 208h8v8h-8zM792 224h8v8h-8zM800 232h8v8h-8zM800 248h8v8h-8zM784 272h8v8h-8zM784 296h8v8h-8zM792 296h8v8h-8zM800 344h8v8h-8zM792 528h8v8h-8zM800 600h8v8h-8zM800 672h8v8h-8zM808 696h8v8h-8zM808 712h8v8h-8zM808 736h8v8h-8zM800 800h8v8h-8zM808 872h8v8h-8zM784 920h8v8h-8zM840 176h8v8h-8zM848 184h8v8h-8zM864 200h8v8h-8zM856 208h8v8h-8zM880 208h8v8h-8zM840 224h8v8h-8zM872 224h8v8h-8zM856 248h8v8h-8zM856 296h8v8h-8zM856 344h8v8h-8zM840 368h8v8h-8zM872 384h8v8h-8zM848 392h8v8h-8zM856 392h8v8h-8zM856 408h8v8h-8zM848 432h8v8h-8zM864 432h8v8h-8zM856 480h8v8h-8zM864 480h8v8h-8zM864 504h8v8h-8zM848 568h8v8h-8zM856 568h8v8h-8zM848 576h8v8h-8zM856 576h8v8h-8zM840 592h8v8h-8zM856 592h8v8h-8zM856 640h8v8h-8zM880 640h8v8h-8zM880 664h8v8h-8zM840 752h8v8h-8zM872 776h8v8h-8zM864 784h8v8h-8zM840 800h8v8h-8zM856 800h8v8h-8zM880 800h8v8h-8zM848 808h8v8h-8zM848 832h8v8h-8zM864 848h8v8h-8zM872 848h8v8h-8zM856 944h8v8h-8z"/><path fill="#ededf0" d="M248 200h8v8h-8zM256 200h8v8h-8zM288 208h8v8h-8zM224 224h8v8h-8zM232 232h8v8h-8zM240 232h8v8h-8zM264 232h8v8h-8zM264 256h8v8h-8zM232 280h8v8h-8zM256 280h8v8h-8zM264 312h8v8h-8zM288 312h8v8h-8zM320 312h8v8h-8zM328 336h8v8h-8zM288 344h8v8h-8zM304 384h8v8h-8zM256 408h8v8h-8zM240 432h8v8h-8zM320 440h8v8h-8zM240 464h8v8h-8zM304 480h8v8h-8zM296 496h8v8h-8zM248 504h8v8h-8zM272 544h8v8h-8zM288 544h8v8h-8zM232 552h8v8h-8zM216 568h8v8h-8zM248 568h8v8h-8zM256 576h8v8h-8zM256 600h8v8h-8zM272 624h8v8h-8zM288 624h8v8h-8zM240 640h8v8h-8zM232 648h8v8h-8zM248 648h8v8h-8zM296 648h8v8h-8zM320 704h8v8h-8zM216 712h8v8h-8zM328 728h8v8h-8zM216 752h8v8h-8zM312 752h8v8h-8zM264 760h8v8h-8zM240 776h8v8h-8zM320 776h8v8h-8zM328 776h8v8h-8zM232 808h8v8h-8zM272 824h8v8h-8zM256 832h8v8h-8zM304 832h8v8h-8zM312 832h8v8h-8zM328 864h8v8h-8zM224 888h8v8h-8zM256 888h8v8h-8zM288 912h8v8h-8zM304 912h8v8h-8zM272 920h8v8h-8zM216 936h8v8h-8zM304 944h8v8h-8zM736 176h8v8h-8zM752 200h8v8h-8zM736 224h8v8h-8zM728 256h8v8h-8zM752 256h8v8h-8zM752 336h8v8h-8zM752 384h8v8h-8zM760 504h8v8h-8zM728 520h8v8h-8zM736 568h8v8h-8zM760 568h8v8h-8zM736 624h8v8h-8zM744 704h8v8h-8zM736 712h8v8h-8zM736 728h8v8h-8zM728 752h8v8h-8zM728 760h8v8h-8zM720 776h8v8h-8zM736 776h8v8h-8zM744 808h8v8h-8zM720 832h8v8h-8zM728 920h8v8h-8zM720 936h8v8h-8zM736 936h8v8h-8zM792 176h8v8h-8zM792 200h8v8h-8zM816 208h8v8h-8zM792 256h8v8h-8zM808 272h8v8h-8zM784 408h8v8h-8zM800 408h8v8h-8zM808 416h8v8h-8zM792 440h8v8h-8zM792 464h8v8h-8zM808 464h8v8h-8zM816 592h8v8h-8zM792 600h8v8h-8zM784 648h8v8h-8zM784 728h8v8h-8zM816 776h8v8h-8zM800 784h8v8h-8zM792 808h8v8h-8zM784 832h8v8h-8zM816 848h8v8h-8zM784 912h8v8h-8zM792 920h8v8h-8zM800 936h8v8h-8zM848 200h8v8h-8zM856 200h8v8h-8zM872 200h8v8h-8zM872 208h8v8h-8zM840 232h8v8h-8zM848 248h8v8h-8zM848 360h8v8h-8zM856 384h8v8h-8zM864 392h8v8h-8zM864 408h8v8h-8zM880 416h8v8h-8zM856 440h8v8h-8zM880 456h8v8h-8zM840 464h8v8h-8zM848 544h8v8h-8zM864 592h8v8h-8zM840 600h8v8h-8zM856 624h8v8h-8zM864 624h8v8h-8zM864 736h8v8h-8zM856 776h8v8h-8zM872 784h8v8h-8zM880 872h8v8h-8zM872 936h8v8h-8z"/><path fill="#fcfcfc" d="M272 208h8v8h-8zM272 312h8v8h-8zM312 312h8v8h-8zM248 336h8v8h-8zM272 432h8v8h-8zM224 464h8v8h-8zM224 496h8v8h-8zM288 496h8v8h-8zM224 520h8v8h-8zM224 680h8v8h-8zM240 680h8v8h-8zM248 680h8v8h-8zM256 680h8v8h-8zM328 680h8v8h-8zM264 728h8v8h-8zM272 728h8v8h-8zM272 832h8v8h-8zM216 864h8v8h-8zM232 864h8v8h-8zM240 864h8v8h-8zM248 864h8v8h-8zM264 864h8v8h-8zM216 888h8v8h-8zM720 312h8v8h-8zM736 312h8v8h-8zM752 320h8v8h-8zM736 336h8v8h-8zM760 336h8v8h-8zM760 360h8v8h-8zM720 496h8v8h-8zM720 520h8v8h-8zM752 520h8v8h-8zM728 680h8v8h-8zM736 680h8v8h-8zM760 704h8v8h-8zM744 832h8v8h-8zM728 864h8v8h-8zM744 864h8v8h-8zM752 888h8v8h-8zM816 256h8v8h-8zM824 296h8v8h-8zM784 312h8v8h-8zM800 312h8v8h-8zM816 312h8v8h-8zM824 312h8v8h-8zM808 360h8v8h-8zM800 496h8v8h-8zM808 496h8v8h-8zM824 600h8v8h-8zM808 648h8v8h-8zM808 680h8v8h-8zM816 680h8v8h-8zM824 920h8v8h-8zM816 944h8v8h-8zM880 176h8v8h-8zM880 256h8v8h-8zM856 312h8v8h-8zM872 312h8v8h-8zM864 336h8v8h-8zM856 360h8v8h-8zM840 496h8v8h-8zM864 496h8v8h-8zM856 680h8v8h-8zM856 704h8v8h-8zM864 832h8v8h-8zM872 832h8v8h-8zM840 864h8v8h-8zM880 864h8v8h-8zM880 888h8v8h-8zM1480 424h8v8h-8z"/><path fill="#eaeaea" d="M280 216h8v8h-8zM280 240h8v8h-8zM280 264h8v8h-8zM280 288h8v8h-8zM296 288h8v8h-8zM312 288h8v8h-8zM224 304h8v8h-8zM280 304h8v8h-8zM288 304h8v8h-8zM280 320h8v8h-8zM216 328h8v8h-8zM232 328h8v8h-8zM280 328h8v8h-8zM280 352h8v8h-8zM296 352h8v8h-8zM320 352h8v8h-8zM280 376h8v8h-8zM280 400h8v8h-8zM280 424h8v8h-8zM280 448h8v8h-8zM280 472h8v8h-8zM216 488h8v8h-8zM232 488h8v8h-8zM240 488h8v8h-8zM256 488h8v8h-8zM280 488h8v8h-8zM288 488h8v8h-8zM320 488h8v8h-8zM328 488h8v8h-8zM232 512h8v8h-8zM280 512h8v8h-8zM312 512h8v8h-8zM320 512h8v8h-8zM328 512h8v8h-8zM280 536h8v8h-8zM304 536h8v8h-8zM312 536h8v8h-8zM320 536h8v8h-8zM280 544h8v8h-8zM280 560h8v8h-8zM280 584h8v8h-8zM280 592h8v8h-8zM280 608h8v8h-8zM280 632h8v8h-8zM280 656h8v8h-8zM288 656h8v8h-8zM248 672h8v8h-8zM256 672h8v8h-8zM280 672h8v8h-8zM312 672h8v8h-8zM216 696h8v8h-8zM328 696h8v8h-8zM280 720h8v8h-8zM288 720h8v8h-8zM280 744h8v8h-8zM280 768h8v8h-8zM280 792h8v8h-8zM280 800h8v8h-8zM280 816h8v8h-8zM280 840h8v8h-8zM248 856h8v8h-8zM280 856h8v8h-8zM224 880h8v8h-8zM280 880h8v8h-8zM288 880h8v8h-8zM312 880h8v8h-8zM328 880h8v8h-8zM280 904h8v8h-8zM288 904h8v8h-8zM280 928h8v8h-8zM752 304h8v8h-8zM744 328h8v8h-8zM720 488h8v8h-8zM736 488h8v8h-8zM720 672h8v8h-8zM736 672h8v8h-8zM728 856h8v8h-8zM736 856h8v8h-8zM720 880h8v8h-8zM784 488h8v8h-8zM800 512h8v8h-8zM792 672h8v8h-8zM800 856h8v8h-8zM784 880h8v8h-8zM840 304h8v8h-8zM864 304h8v8h-8zM872 328h8v8h-8zM856 488h8v8h-8zM864 488h8v8h-8zM872 488h8v8h-8zM864 512h8v8h-8zM848 856h8v8h-8zM1368 256h8v8h-8zM1440 280h8v8h-8zM1448 280h8v8h-8zM1440 304h8v8h-8zM1472 376h8v8h-8zM1296 400h8v8h-8zM1328 400h8v8h-8zM1376 400h8v8h-8zM1264 448h8v8h-8zM1352 448h8v8h-8zM1432 448h8v8h-8zM1440 928h8v8h-8z"/><path fill="#f9f9f9" d="M272 224h8v8h-8zM288 280h8v8h-8zM224 312h8v8h-8zM232 312h8v8h-8zM256 312h8v8h-8zM296 312h8v8h-8zM328 312h8v8h-8zM216 336h8v8h-8zM224 336h8v8h-8zM288 336h8v8h-8zM264 360h8v8h-8zM272 360h8v8h-8zM256 464h8v8h-8zM216 496h8v8h-8zM232 496h8v8h-8zM240 496h8v8h-8zM248 496h8v8h-8zM256 496h8v8h-8zM248 520h8v8h-8zM304 520h8v8h-8zM248 544h8v8h-8zM264 648h8v8h-8zM272 648h8v8h-8zM216 680h8v8h-8zM264 680h8v8h-8zM272 680h8v8h-8zM296 680h8v8h-8zM216 704h8v8h-8zM224 704h8v8h-8zM264 704h8v8h-8zM312 704h8v8h-8zM232 832h8v8h-8zM224 864h8v8h-8zM272 864h8v8h-8zM312 864h8v8h-8zM232 888h8v8h-8zM240 888h8v8h-8zM272 888h8v8h-8zM272 912h8v8h-8zM744 280h8v8h-8zM760 296h8v8h-8zM728 312h8v8h-8zM744 312h8v8h-8zM744 360h8v8h-8zM760 384h8v8h-8zM760 456h8v8h-8zM760 464h8v8h-8zM736 496h8v8h-8zM760 576h8v8h-8zM760 640h8v8h-8zM744 680h8v8h-8zM720 704h8v8h-8zM760 712h8v8h-8zM760 728h8v8h-8zM760 736h8v8h-8zM720 888h8v8h-8zM720 912h8v8h-8zM736 912h8v8h-8zM824 224h8v8h-8zM800 280h8v8h-8zM800 336h8v8h-8zM816 336h8v8h-8zM816 384h8v8h-8zM808 408h8v8h-8zM784 464h8v8h-8zM816 464h8v8h-8zM816 504h8v8h-8zM784 520h8v8h-8zM808 520h8v8h-8zM808 544h8v8h-8zM824 592h8v8h-8zM784 680h8v8h-8zM792 680h8v8h-8zM800 680h8v8h-8zM800 704h8v8h-8zM808 704h8v8h-8zM824 728h8v8h-8zM800 752h8v8h-8zM816 760h8v8h-8zM808 888h8v8h-8zM824 912h8v8h-8zM880 184h8v8h-8zM880 248h8v8h-8zM840 312h8v8h-8zM864 312h8v8h-8zM880 312h8v8h-8zM848 336h8v8h-8zM872 520h8v8h-8zM880 520h8v8h-8zM864 544h8v8h-8zM880 568h8v8h-8zM880 576h8v8h-8zM848 680h8v8h-8zM864 680h8v8h-8zM840 704h8v8h-8zM872 704h8v8h-8zM872 864h8v8h-8zM872 888h8v8h-8zM856 912h8v8h-8zM856 920h8v8h-8z"/><path fill="#f0f0f0" d="M280 224h8v8h-8zM280 272h8v8h-8zM280 280h8v8h-8zM288 288h8v8h-8zM304 288h8v8h-8zM328 288h8v8h-8zM216 304h8v8h-8zM248 304h8v8h-8zM280 312h8v8h-8zM224 328h8v8h-8zM240 328h8v8h-8zM248 328h8v8h-8zM256 328h8v8h-8zM264 328h8v8h-8zM272 328h8v8h-8zM296 328h8v8h-8zM288 352h8v8h-8zM280 392h8v8h-8zM288 472h8v8h-8zM296 472h8v8h-8zM320 472h8v8h-8zM328 472h8v8h-8zM272 488h8v8h-8zM216 512h8v8h-8zM288 536h8v8h-8zM328 536h8v8h-8zM296 656h8v8h-8zM304 656h8v8h-8zM328 656h8v8h-8zM232 672h8v8h-8zM224 696h8v8h-8zM248 696h8v8h-8zM256 696h8v8h-8zM304 720h8v8h-8zM312 720h8v8h-8zM320 720h8v8h-8zM280 808h8v8h-8zM288 840h8v8h-8zM296 840h8v8h-8zM272 856h8v8h-8zM248 880h8v8h-8zM264 880h8v8h-8zM296 904h8v8h-8zM304 904h8v8h-8zM328 904h8v8h-8zM720 328h8v8h-8zM736 328h8v8h-8zM752 488h8v8h-8zM728 512h8v8h-8zM736 512h8v8h-8zM728 672h8v8h-8zM728 696h8v8h-8zM728 880h8v8h-8zM736 880h8v8h-8zM808 328h8v8h-8zM792 512h8v8h-8zM816 512h8v8h-8zM824 672h8v8h-8zM792 696h8v8h-8zM800 696h8v8h-8zM808 856h8v8h-8zM816 856h8v8h-8zM792 880h8v8h-8zM848 304h8v8h-8zM840 328h8v8h-8zM848 328h8v8h-8zM856 328h8v8h-8zM840 488h8v8h-8zM848 512h8v8h-8zM848 672h8v8h-8zM840 696h8v8h-8zM848 696h8v8h-8zM872 856h8v8h-8zM848 880h8v8h-8zM856 880h8v8h-8zM864 880h8v8h-8zM1344 280h8v8h-8zM1400 280h8v8h-8zM1408 280h8v8h-8zM1464 280h8v8h-8zM1280 328h8v8h-8zM1336 352h8v8h-8zM1520 424h8v8h-8z"/><path fill="#cfcfd5" d="M320 224h8v8h-8zM224 272h8v8h-8zM240 296h8v8h-8zM256 296h8v8h-8zM328 296h8v8h-8zM256 320h8v8h-8zM272 320h8v8h-8zM304 320h8v8h-8zM304 392h8v8h-8zM232 480h8v8h-8zM312 504h8v8h-8zM216 552h8v8h-8zM304 552h8v8h-8zM328 616h8v8h-8zM320 640h8v8h-8zM328 640h8v8h-8zM288 688h8v8h-8zM264 712h8v8h-8zM216 800h8v8h-8zM288 824h8v8h-8zM232 848h8v8h-8zM224 872h8v8h-8zM256 872h8v8h-8zM296 872h8v8h-8zM224 896h8v8h-8zM232 896h8v8h-8zM256 896h8v8h-8zM736 184h8v8h-8zM720 344h8v8h-8zM744 504h8v8h-8zM744 640h8v8h-8zM744 664h8v8h-8zM744 688h8v8h-8zM720 712h8v8h-8zM744 800h8v8h-8zM728 896h8v8h-8zM800 272h8v8h-8zM800 368h8v8h-8zM816 480h8v8h-8zM792 616h8v8h-8zM800 712h8v8h-8zM792 872h8v8h-8zM856 272h8v8h-8zM880 296h8v8h-8zM840 392h8v8h-8zM856 432h8v8h-8zM848 456h8v8h-8zM856 456h8v8h-8zM872 480h8v8h-8zM872 688h8v8h-8zM840 736h8v8h-8zM840 848h8v8h-8z"/><path fill="#c9c9cf" d="M296 232h8v8h-8zM320 248h8v8h-8zM264 272h8v8h-8zM304 272h8v8h-8zM328 528h8v8h-8zM240 552h8v8h-8zM216 688h8v8h-8zM248 712h8v8h-8zM320 712h8v8h-8zM248 872h8v8h-8zM744 456h8v8h-8zM720 528h8v8h-8zM784 184h8v8h-8zM800 688h8v8h-8zM792 848h8v8h-8zM800 872h8v8h-8zM856 184h8v8h-8zM872 296h8v8h-8zM848 848h8v8h-8zM856 848h8v8h-8zM848 896h8v8h-8zM856 896h8v8h-8zM840 944h8v8h-8z"/><path fill="#c0c0c6" d="M248 272h8v8h-8zM296 320h8v8h-8zM312 480h8v8h-8zM312 688h8v8h-8zM264 848h8v8h-8zM264 896h8v8h-8zM784 736h8v8h-8z"/><path fill="#c6c6cc" d="M296 272h8v8h-8zM304 296h8v8h-8zM224 320h8v8h-8zM232 320h8v8h-8zM224 344h8v8h-8zM320 344h8v8h-8zM320 368h8v8h-8zM328 392h8v8h-8zM312 640h8v8h-8zM264 664h8v8h-8zM304 664h8v8h-8zM320 736h8v8h-8zM248 920h8v8h-8zM264 920h8v8h-8zM744 392h8v8h-8zM736 688h8v8h-8zM792 480h8v8h-8zM800 504h8v8h-8zM784 688h8v8h-8zM848 504h8v8h-8zM856 552h8v8h-8zM848 712h8v8h-8zM872 872h8v8h-8z"/><path fill="#ccccd2" d="M296 296h8v8h-8zM320 296h8v8h-8zM312 408h8v8h-8zM248 432h8v8h-8zM248 480h8v8h-8zM248 528h8v8h-8zM296 616h8v8h-8zM288 640h8v8h-8zM296 664h8v8h-8zM224 688h8v8h-8zM248 688h8v8h-8zM272 712h8v8h-8zM288 712h8v8h-8zM328 736h8v8h-8zM256 800h8v8h-8zM304 824h8v8h-8zM224 848h8v8h-8zM296 896h8v8h-8zM304 920h8v8h-8zM752 344h8v8h-8zM720 456h8v8h-8zM752 504h8v8h-8zM728 664h8v8h-8zM720 848h8v8h-8zM744 872h8v8h-8zM720 896h8v8h-8zM808 504h8v8h-8zM848 552h8v8h-8zM848 640h8v8h-8zM840 920h8v8h-8z"/><path fill="#ededed" d="M232 304h8v8h-8zM256 304h8v8h-8zM264 304h8v8h-8zM288 328h8v8h-8zM280 416h8v8h-8zM304 472h8v8h-8zM224 488h8v8h-8zM256 512h8v8h-8zM264 512h8v8h-8zM296 536h8v8h-8zM280 600h8v8h-8zM312 656h8v8h-8zM216 672h8v8h-8zM240 672h8v8h-8zM264 672h8v8h-8zM280 688h8v8h-8zM232 696h8v8h-8zM264 696h8v8h-8zM296 696h8v8h-8zM304 696h8v8h-8zM328 720h8v8h-8zM312 840h8v8h-8zM320 840h8v8h-8zM232 856h8v8h-8zM288 856h8v8h-8zM296 856h8v8h-8zM312 856h8v8h-8zM232 880h8v8h-8zM256 880h8v8h-8zM272 880h8v8h-8zM320 904h8v8h-8zM720 304h8v8h-8zM728 304h8v8h-8zM736 304h8v8h-8zM728 488h8v8h-8zM720 512h8v8h-8zM744 696h8v8h-8zM752 856h8v8h-8zM744 880h8v8h-8zM792 304h8v8h-8zM800 304h8v8h-8zM808 304h8v8h-8zM784 328h8v8h-8zM792 328h8v8h-8zM800 488h8v8h-8zM808 488h8v8h-8zM824 488h8v8h-8zM784 512h8v8h-8zM808 512h8v8h-8zM816 672h8v8h-8zM816 696h8v8h-8zM784 856h8v8h-8zM800 880h8v8h-8zM856 304h8v8h-8zM880 304h8v8h-8zM880 328h8v8h-8zM848 488h8v8h-8zM840 512h8v8h-8zM872 512h8v8h-8zM840 672h8v8h-8zM880 672h8v8h-8zM856 696h8v8h-8zM872 696h8v8h-8zM880 880h8v8h-8z"/><path fill="#e7e7e7" d="M240 304h8v8h-8zM304 304h8v8h-8zM328 328h8v8h-8zM264 488h8v8h-8zM296 488h8v8h-8zM240 512h8v8h-8zM280 552h8v8h-8zM224 672h8v8h-8zM272 672h8v8h-8zM328 672h8v8h-8zM280 696h8v8h-8zM288 696h8v8h-8zM304 840h8v8h-8zM216 856h8v8h-8zM240 856h8v8h-8zM296 880h8v8h-8zM304 880h8v8h-8zM320 880h8v8h-8zM312 904h8v8h-8zM744 488h8v8h-8zM744 512h8v8h-8zM752 512h8v8h-8zM752 672h8v8h-8zM784 304h8v8h-8zM792 488h8v8h-8zM784 672h8v8h-8zM792 856h8v8h-8zM872 304h8v8h-8zM856 512h8v8h-8zM840 856h8v8h-8zM864 856h8v8h-8zM1288 256h8v8h-8zM1392 256h8v8h-8zM1304 280h8v8h-8zM1424 304h8v8h-8zM1472 304h8v8h-8zM1384 352h8v8h-8zM1448 352h8v8h-8zM1440 376h8v8h-8zM1512 376h8v8h-8zM1528 376h8v8h-8zM1304 400h8v8h-8zM1400 400h8v8h-8zM1360 448h8v8h-8zM1192 928h8v8h-8zM1224 928h8v8h-8z"/><path fill="#b7b7c0" d="M320 320h8v8h-8zM320 528h8v8h-8zM304 616h8v8h-8zM808 456h8v8h-8z"/><path fill="#b4b4bd" d="M240 504h8v8h-8z"/><path fill="#c3c3c9" d="M264 504h8v8h-8zM240 616h8v8h-8zM312 616h8v8h-8zM256 640h8v8h-8zM312 736h8v8h-8zM320 944h8v8h-8zM752 184h8v8h-8zM728 368h8v8h-8zM736 848h8v8h-8zM736 920h8v8h-8zM784 320h8v8h-8zM808 480h8v8h-8z"/><path fill="#babac3" d="M232 688h8v8h-8zM720 872h8v8h-8z"/><path fill="#bdbdc3" d="M328 896h8v8h-8zM744 528h8v8h-8z"/><path fill="#e7eaea" d="M280 944h8v8h-8z"/><path fill="#b4b4b4" d="M1264 184h8v8h-8zM1280 184h8v8h-8zM1384 184h8v8h-8zM1392 184h8v8h-8zM1472 184h8v8h-8zM1528 184h8v8h-8zM1408 192h8v8h-8zM1304 200h8v8h-8zM1392 200h8v8h-8zM1360 208h8v8h-8zM1384 216h8v8h-8zM1472 216h8v8h-8zM1488 216h8v8h-8zM1296 224h8v8h-8zM1384 224h8v8h-8zM1520 224h8v8h-8zM1272 240h8v8h-8zM1368 240h8v8h-8zM1296 264h8v8h-8zM1296 272h8v8h-8zM1456 272h8v8h-8zM1304 296h8v8h-8zM1400 296h8v8h-8zM1320 304h8v8h-8zM1360 312h8v8h-8zM1368 312h8v8h-8zM1344 336h8v8h-8zM1288 344h8v8h-8zM1384 344h8v8h-8zM1336 376h8v8h-8zM1400 376h8v8h-8zM1280 384h8v8h-8zM1288 384h8v8h-8zM1320 384h8v8h-8zM1432 384h8v8h-8zM1280 416h8v8h-8zM1304 416h8v8h-8zM1424 416h8v8h-8zM1432 416h8v8h-8zM1288 424h8v8h-8zM1320 424h8v8h-8zM1440 440h8v8h-8zM1496 440h8v8h-8z"/><path fill="#d8d8d8" d="M1272 184h8v8h-8zM1296 184h8v8h-8zM1336 184h8v8h-8zM1392 224h8v8h-8zM1480 224h8v8h-8zM1272 256h8v8h-8zM1336 264h8v8h-8zM1328 280h8v8h-8zM1352 280h8v8h-8zM1384 280h8v8h-8zM1416 280h8v8h-8zM1408 304h8v8h-8zM1448 304h8v8h-8zM1456 304h8v8h-8zM1296 328h8v8h-8zM1312 328h8v8h-8zM1320 328h8v8h-8zM1392 328h8v8h-8zM1288 352h8v8h-8zM1320 352h8v8h-8zM1344 352h8v8h-8zM1360 352h8v8h-8zM1408 352h8v8h-8zM1488 352h8v8h-8zM1272 376h8v8h-8zM1488 376h8v8h-8zM1272 384h8v8h-8zM1352 400h8v8h-8zM1368 400h8v8h-8zM1328 408h8v8h-8zM1320 448h8v8h-8zM1336 448h8v8h-8zM1448 448h8v8h-8zM1208 928h8v8h-8z"/><path fill="#cfcfcf" d="M1288 184h8v8h-8zM1464 184h8v8h-8zM1496 192h8v8h-8zM1520 208h8v8h-8zM1280 240h8v8h-8zM1296 256h8v8h-8zM1312 272h8v8h-8zM1296 280h8v8h-8zM1360 280h8v8h-8zM1392 280h8v8h-8zM1528 280h8v8h-8zM1392 304h8v8h-8zM1368 328h8v8h-8zM1368 352h8v8h-8zM1328 368h8v8h-8zM1352 368h8v8h-8zM1288 400h8v8h-8zM1312 416h8v8h-8zM1360 416h8v8h-8zM1272 424h8v8h-8zM1440 424h8v8h-8zM1408 432h8v8h-8zM1512 432h8v8h-8zM1400 440h8v8h-8zM1424 448h8v8h-8zM1472 448h8v8h-8zM1512 448h8v8h-8zM1456 928h8v8h-8z"/><path fill="#a2a2a2" d="M1304 184h8v8h-8zM1456 184h8v8h-8zM1264 192h8v8h-8zM1280 192h8v8h-8zM1336 200h8v8h-8zM1352 200h8v8h-8zM1368 208h8v8h-8zM1400 208h8v8h-8zM1512 216h8v8h-8zM1464 224h8v8h-8zM1360 232h8v8h-8zM1264 240h8v8h-8zM1320 240h8v8h-8zM1360 264h8v8h-8zM1392 264h8v8h-8zM1520 272h8v8h-8zM1272 296h8v8h-8zM1360 296h8v8h-8zM1392 296h8v8h-8zM1408 312h8v8h-8zM1360 344h8v8h-8zM1368 344h8v8h-8zM1520 344h8v8h-8zM1536 344h8v8h-8zM1288 368h8v8h-8zM1368 384h8v8h-8zM1416 384h8v8h-8zM1520 384h8v8h-8zM1360 408h8v8h-8zM1424 424h8v8h-8zM1400 432h8v8h-8zM1416 432h8v8h-8zM1464 432h8v8h-8zM1488 432h8v8h-8zM1280 440h8v8h-8zM1480 936h8v8h-8z"/><path fill="#c0c0c0" d="M1312 184h8v8h-8zM1408 184h8v8h-8zM1424 184h8v8h-8zM1448 184h8v8h-8zM1368 192h8v8h-8zM1392 192h8v8h-8zM1488 192h8v8h-8zM1272 200h8v8h-8zM1400 200h8v8h-8zM1320 208h8v8h-8zM1344 208h8v8h-8zM1384 208h8v8h-8zM1312 216h8v8h-8zM1272 224h8v8h-8zM1280 224h8v8h-8zM1400 224h8v8h-8zM1320 232h8v8h-8zM1328 232h8v8h-8zM1352 232h8v8h-8zM1384 232h8v8h-8zM1408 232h8v8h-8zM1472 232h8v8h-8zM1488 232h8v8h-8zM1504 232h8v8h-8zM1376 256h8v8h-8zM1288 264h8v8h-8zM1408 272h8v8h-8zM1304 304h8v8h-8zM1368 304h8v8h-8zM1296 312h8v8h-8zM1304 312h8v8h-8zM1264 328h8v8h-8zM1272 336h8v8h-8zM1352 336h8v8h-8zM1512 344h8v8h-8zM1368 368h8v8h-8zM1320 376h8v8h-8zM1360 376h8v8h-8zM1368 376h8v8h-8zM1384 376h8v8h-8zM1304 384h8v8h-8zM1424 384h8v8h-8zM1472 384h8v8h-8zM1376 408h8v8h-8zM1272 416h8v8h-8zM1352 416h8v8h-8zM1376 416h8v8h-8zM1392 424h8v8h-8zM1448 424h8v8h-8zM1264 432h8v8h-8zM1328 432h8v8h-8zM1336 440h8v8h-8zM1216 920h8v8h-8z"/><path fill="#bababa" d="M1320 184h8v8h-8zM1496 184h8v8h-8zM1312 200h8v8h-8zM1432 200h8v8h-8zM1464 200h8v8h-8zM1352 208h8v8h-8zM1448 208h8v8h-8zM1472 208h8v8h-8zM1488 208h8v8h-8zM1320 224h8v8h-8zM1504 224h8v8h-8zM1264 232h8v8h-8zM1296 232h8v8h-8zM1304 232h8v8h-8zM1400 232h8v8h-8zM1448 232h8v8h-8zM1464 232h8v8h-8zM1376 240h8v8h-8zM1440 240h8v8h-8zM1480 240h8v8h-8zM1528 240h8v8h-8zM1368 264h8v8h-8zM1376 264h8v8h-8zM1304 272h8v8h-8zM1368 272h8v8h-8zM1376 272h8v8h-8zM1384 272h8v8h-8zM1328 296h8v8h-8zM1328 336h8v8h-8zM1360 336h8v8h-8zM1392 336h8v8h-8zM1424 344h8v8h-8zM1432 344h8v8h-8zM1464 344h8v8h-8zM1504 344h8v8h-8zM1264 368h8v8h-8zM1400 368h8v8h-8zM1264 376h8v8h-8zM1312 376h8v8h-8zM1304 408h8v8h-8zM1392 416h8v8h-8zM1280 424h8v8h-8zM1336 424h8v8h-8zM1408 424h8v8h-8zM1472 424h8v8h-8zM1456 432h8v8h-8zM1496 432h8v8h-8zM1384 440h8v8h-8zM1408 440h8v8h-8zM1424 440h8v8h-8zM1464 440h8v8h-8zM1224 920h8v8h-8z"/><path fill="#aeaeae" d="M1328 184h8v8h-8zM1440 184h8v8h-8zM1328 192h8v8h-8zM1448 192h8v8h-8zM1472 192h8v8h-8zM1528 192h8v8h-8zM1296 200h8v8h-8zM1320 200h8v8h-8zM1328 200h8v8h-8zM1480 200h8v8h-8zM1280 208h8v8h-8zM1408 208h8v8h-8zM1360 216h8v8h-8zM1440 216h8v8h-8zM1336 224h8v8h-8zM1424 224h8v8h-8zM1288 232h8v8h-8zM1336 232h8v8h-8zM1536 232h8v8h-8zM1296 240h8v8h-8zM1400 240h8v8h-8zM1416 240h8v8h-8zM1536 240h8v8h-8zM1304 264h8v8h-8zM1344 264h8v8h-8zM1328 272h8v8h-8zM1472 272h8v8h-8zM1512 272h8v8h-8zM1280 296h8v8h-8zM1336 304h8v8h-8zM1416 312h8v8h-8zM1440 312h8v8h-8zM1288 336h8v8h-8zM1304 336h8v8h-8zM1344 344h8v8h-8zM1472 344h8v8h-8zM1488 344h8v8h-8zM1272 368h8v8h-8zM1352 376h8v8h-8zM1440 384h8v8h-8zM1464 384h8v8h-8zM1280 408h8v8h-8zM1320 408h8v8h-8zM1296 416h8v8h-8zM1440 416h8v8h-8zM1368 424h8v8h-8zM1280 432h8v8h-8zM1440 432h8v8h-8zM1360 440h8v8h-8zM1488 440h8v8h-8z"/><path fill="#939393" d="M1344 184h8v8h-8zM1456 200h8v8h-8zM1328 240h8v8h-8zM1456 240h8v8h-8zM1352 264h8v8h-8zM1400 264h8v8h-8zM1424 272h8v8h-8zM1352 312h8v8h-8zM1448 312h8v8h-8zM1392 344h8v8h-8zM1376 368h8v8h-8zM1288 416h8v8h-8zM1272 432h8v8h-8zM1456 936h8v8h-8z"/><path fill="#c3c3c3" d="M1352 184h8v8h-8zM1320 192h8v8h-8zM1384 200h8v8h-8zM1312 208h8v8h-8zM1336 208h8v8h-8zM1416 208h8v8h-8zM1432 208h8v8h-8zM1464 208h8v8h-8zM1296 216h8v8h-8zM1320 216h8v8h-8zM1392 216h8v8h-8zM1464 216h8v8h-8zM1472 224h8v8h-8zM1272 232h8v8h-8zM1392 232h8v8h-8zM1328 264h8v8h-8zM1432 272h8v8h-8zM1528 272h8v8h-8zM1480 280h8v8h-8zM1264 296h8v8h-8zM1312 296h8v8h-8zM1336 296h8v8h-8zM1344 304h8v8h-8zM1424 312h8v8h-8zM1320 336h8v8h-8zM1384 336h8v8h-8zM1480 344h8v8h-8zM1264 352h8v8h-8zM1392 376h8v8h-8zM1312 384h8v8h-8zM1408 384h8v8h-8zM1288 408h8v8h-8zM1328 416h8v8h-8zM1296 424h8v8h-8zM1344 424h8v8h-8zM1352 424h8v8h-8zM1416 424h8v8h-8zM1304 432h8v8h-8zM1360 432h8v8h-8zM1328 440h8v8h-8zM1432 440h8v8h-8zM1528 440h8v8h-8z"/><path fill="#c6c6c6" d="M1360 184h8v8h-8zM1376 184h8v8h-8zM1336 192h8v8h-8zM1360 192h8v8h-8zM1456 192h8v8h-8zM1264 200h8v8h-8zM1472 200h8v8h-8zM1504 200h8v8h-8zM1264 208h8v8h-8zM1376 208h8v8h-8zM1504 208h8v8h-8zM1536 208h8v8h-8zM1304 216h8v8h-8zM1280 232h8v8h-8zM1368 232h8v8h-8zM1376 232h8v8h-8zM1360 240h8v8h-8zM1504 240h8v8h-8zM1304 256h8v8h-8zM1384 264h8v8h-8zM1336 280h8v8h-8zM1288 296h8v8h-8zM1344 296h8v8h-8zM1288 304h8v8h-8zM1312 312h8v8h-8zM1344 312h8v8h-8zM1352 328h8v8h-8zM1520 352h8v8h-8zM1304 368h8v8h-8zM1456 376h8v8h-8zM1400 384h8v8h-8zM1504 384h8v8h-8zM1360 400h8v8h-8zM1384 408h8v8h-8zM1448 416h8v8h-8zM1376 424h8v8h-8zM1480 432h8v8h-8zM1320 440h8v8h-8zM1344 440h8v8h-8zM1280 448h8v8h-8zM1192 920h8v8h-8zM1464 936h8v8h-8z"/><path fill="#cccccc" d="M1368 184h8v8h-8zM1480 184h8v8h-8zM1304 192h8v8h-8zM1400 192h8v8h-8zM1304 208h8v8h-8zM1432 216h8v8h-8zM1488 224h8v8h-8zM1528 232h8v8h-8zM1288 240h8v8h-8zM1312 240h8v8h-8zM1512 240h8v8h-8zM1280 256h8v8h-8zM1280 272h8v8h-8zM1472 280h8v8h-8zM1328 312h8v8h-8zM1384 312h8v8h-8zM1392 312h8v8h-8zM1320 344h8v8h-8zM1328 352h8v8h-8zM1392 352h8v8h-8zM1400 352h8v8h-8zM1280 376h8v8h-8zM1360 384h8v8h-8zM1280 400h8v8h-8zM1328 424h8v8h-8zM1360 424h8v8h-8zM1488 424h8v8h-8zM1504 432h8v8h-8zM1416 440h8v8h-8zM1456 440h8v8h-8zM1472 928h8v8h-8z"/><path fill="#b7b7b7" d="M1400 184h8v8h-8zM1512 184h8v8h-8zM1288 192h8v8h-8zM1352 192h8v8h-8zM1288 200h8v8h-8zM1368 200h8v8h-8zM1448 200h8v8h-8zM1288 208h8v8h-8zM1424 208h8v8h-8zM1480 208h8v8h-8zM1496 208h8v8h-8zM1264 216h8v8h-8zM1344 216h8v8h-8zM1416 216h8v8h-8zM1528 216h8v8h-8zM1352 224h8v8h-8zM1368 224h8v8h-8zM1376 224h8v8h-8zM1416 224h8v8h-8zM1432 232h8v8h-8zM1440 232h8v8h-8zM1520 232h8v8h-8zM1352 240h8v8h-8zM1392 240h8v8h-8zM1448 240h8v8h-8zM1320 264h8v8h-8zM1320 272h8v8h-8zM1344 272h8v8h-8zM1440 272h8v8h-8zM1312 304h8v8h-8zM1400 304h8v8h-8zM1288 312h8v8h-8zM1320 312h8v8h-8zM1432 312h8v8h-8zM1280 336h8v8h-8zM1368 336h8v8h-8zM1264 344h8v8h-8zM1360 368h8v8h-8zM1344 376h8v8h-8zM1392 384h8v8h-8zM1448 384h8v8h-8zM1496 384h8v8h-8zM1528 384h8v8h-8zM1320 416h8v8h-8zM1384 416h8v8h-8zM1400 416h8v8h-8zM1264 424h8v8h-8zM1400 424h8v8h-8zM1432 424h8v8h-8zM1336 432h8v8h-8zM1432 432h8v8h-8zM1288 440h8v8h-8z"/><path fill="#9f9f9f" d="M1416 184h8v8h-8zM1432 184h8v8h-8zM1520 184h8v8h-8zM1416 200h8v8h-8zM1440 200h8v8h-8zM1296 208h8v8h-8zM1272 216h8v8h-8zM1376 216h8v8h-8zM1400 216h8v8h-8zM1496 232h8v8h-8zM1432 240h8v8h-8zM1272 264h8v8h-8zM1392 272h8v8h-8zM1416 272h8v8h-8zM1536 272h8v8h-8zM1320 296h8v8h-8zM1272 304h8v8h-8zM1464 312h8v8h-8zM1336 336h8v8h-8zM1376 336h8v8h-8zM1272 344h8v8h-8zM1304 344h8v8h-8zM1328 344h8v8h-8zM1440 344h8v8h-8zM1376 376h8v8h-8zM1296 384h8v8h-8zM1304 424h8v8h-8zM1352 432h8v8h-8zM1384 432h8v8h-8zM1536 440h8v8h-8z"/><path fill="#d2d2d2" d="M1488 184h8v8h-8zM1352 216h8v8h-8zM1496 216h8v8h-8zM1264 224h8v8h-8zM1416 232h8v8h-8zM1328 256h8v8h-8zM1400 256h8v8h-8zM1464 272h8v8h-8zM1312 280h8v8h-8zM1456 280h8v8h-8zM1496 280h8v8h-8zM1504 280h8v8h-8zM1384 296h8v8h-8zM1296 304h8v8h-8zM1376 304h8v8h-8zM1416 304h8v8h-8zM1432 304h8v8h-8zM1464 304h8v8h-8zM1376 312h8v8h-8zM1272 328h8v8h-8zM1344 328h8v8h-8zM1352 352h8v8h-8zM1512 352h8v8h-8zM1536 352h8v8h-8zM1344 368h8v8h-8zM1328 376h8v8h-8zM1416 376h8v8h-8zM1464 376h8v8h-8zM1520 376h8v8h-8zM1480 384h8v8h-8zM1512 384h8v8h-8zM1272 400h8v8h-8zM1336 400h8v8h-8zM1344 400h8v8h-8zM1504 424h8v8h-8zM1536 424h8v8h-8zM1312 432h8v8h-8zM1392 432h8v8h-8zM1520 432h8v8h-8zM1536 432h8v8h-8zM1272 448h8v8h-8zM1296 448h8v8h-8zM1376 448h8v8h-8zM1392 448h8v8h-8zM1496 448h8v8h-8zM1504 448h8v8h-8zM1528 448h8v8h-8zM1424 928h8v8h-8zM1432 928h8v8h-8zM1480 928h8v8h-8z"/><path fill="#909090" d="M1504 184h8v8h-8zM1520 192h8v8h-8zM1408 216h8v8h-8zM1480 216h8v8h-8zM1504 216h8v8h-8zM1536 216h8v8h-8zM1304 240h8v8h-8zM1408 240h8v8h-8zM1424 240h8v8h-8zM1488 240h8v8h-8zM1352 272h8v8h-8zM1496 272h8v8h-8zM1352 344h8v8h-8zM1408 344h8v8h-8zM1416 344h8v8h-8zM1336 368h8v8h-8zM1352 384h8v8h-8zM1456 384h8v8h-8zM1312 408h8v8h-8zM1296 432h8v8h-8zM1528 432h8v8h-8zM1368 440h8v8h-8zM1472 936h8v8h-8z"/><path fill="#a8a8a8" d="M1536 184h8v8h-8zM1312 192h8v8h-8zM1344 192h8v8h-8zM1376 192h8v8h-8zM1512 192h8v8h-8zM1344 200h8v8h-8zM1488 200h8v8h-8zM1328 208h8v8h-8zM1456 208h8v8h-8zM1280 216h8v8h-8zM1288 216h8v8h-8zM1368 216h8v8h-8zM1328 224h8v8h-8zM1432 224h8v8h-8zM1312 232h8v8h-8zM1344 232h8v8h-8zM1424 232h8v8h-8zM1472 240h8v8h-8zM1264 312h8v8h-8zM1280 312h8v8h-8zM1536 384h8v8h-8zM1296 408h8v8h-8zM1400 408h8v8h-8zM1384 424h8v8h-8zM1344 432h8v8h-8zM1472 432h8v8h-8zM1264 440h8v8h-8zM1208 920h8v8h-8zM1424 936h8v8h-8zM1440 936h8v8h-8z"/><path fill="#878787" d="M1272 192h8v8h-8zM1336 216h8v8h-8zM1440 224h8v8h-8zM1344 240h8v8h-8zM1280 264h8v8h-8zM1352 304h8v8h-8zM1400 312h8v8h-8zM1400 344h8v8h-8zM1328 384h8v8h-8zM1344 384h8v8h-8zM1376 384h8v8h-8zM1336 408h8v8h-8zM1512 440h8v8h-8z"/><path fill="#ababab" d="M1296 192h8v8h-8zM1440 192h8v8h-8zM1280 200h8v8h-8zM1360 200h8v8h-8zM1376 200h8v8h-8zM1408 200h8v8h-8zM1272 208h8v8h-8zM1392 208h8v8h-8zM1456 216h8v8h-8zM1456 224h8v8h-8zM1496 224h8v8h-8zM1456 232h8v8h-8zM1512 232h8v8h-8zM1464 240h8v8h-8zM1272 272h8v8h-8zM1360 272h8v8h-8zM1504 272h8v8h-8zM1376 296h8v8h-8zM1280 304h8v8h-8zM1328 304h8v8h-8zM1360 304h8v8h-8zM1472 312h8v8h-8zM1296 344h8v8h-8zM1280 368h8v8h-8zM1296 368h8v8h-8zM1312 368h8v8h-8zM1392 368h8v8h-8zM1296 376h8v8h-8zM1352 408h8v8h-8zM1368 416h8v8h-8zM1408 416h8v8h-8zM1472 416h8v8h-8zM1272 440h8v8h-8zM1312 440h8v8h-8zM1520 440h8v8h-8z"/><path fill="#7e7e7e" d="M1384 192h8v8h-8zM1536 192h8v8h-8z"/><path fill="#848484" d="M1416 192h8v8h-8zM1504 192h8v8h-8zM1448 216h8v8h-8zM1304 224h8v8h-8zM1512 224h8v8h-8zM1528 224h8v8h-8zM1288 272h8v8h-8zM1264 336h8v8h-8zM1296 336h8v8h-8zM1528 344h8v8h-8zM1336 416h8v8h-8zM1448 440h8v8h-8zM1480 440h8v8h-8z"/><path fill="#9c9c9c" d="M1424 192h8v8h-8zM1432 192h8v8h-8zM1464 192h8v8h-8zM1480 192h8v8h-8zM1288 224h8v8h-8zM1312 224h8v8h-8zM1360 224h8v8h-8zM1408 224h8v8h-8zM1536 224h8v8h-8zM1384 240h8v8h-8zM1520 240h8v8h-8zM1312 264h8v8h-8zM1296 296h8v8h-8zM1368 296h8v8h-8zM1264 304h8v8h-8zM1312 336h8v8h-8zM1376 344h8v8h-8zM1456 344h8v8h-8zM1496 344h8v8h-8zM1264 384h8v8h-8zM1368 408h8v8h-8zM1344 416h8v8h-8zM1416 416h8v8h-8zM1456 424h8v8h-8zM1376 432h8v8h-8zM1392 440h8v8h-8zM1448 936h8v8h-8z"/><path fill="#969696" d="M1424 200h8v8h-8zM1520 216h8v8h-8zM1264 264h8v8h-8zM1336 272h8v8h-8zM1448 272h8v8h-8zM1488 272h8v8h-8zM1352 296h8v8h-8zM1456 312h8v8h-8zM1280 344h8v8h-8zM1448 344h8v8h-8zM1320 368h8v8h-8zM1384 368h8v8h-8zM1488 384h8v8h-8zM1264 408h8v8h-8zM1464 416h8v8h-8zM1464 424h8v8h-8zM1288 432h8v8h-8zM1304 440h8v8h-8zM1352 440h8v8h-8zM1472 440h8v8h-8zM1504 440h8v8h-8zM1200 920h8v8h-8zM1432 936h8v8h-8z"/><path fill="#7b7b7b" d="M1496 200h8v8h-8zM1480 272h8v8h-8zM1272 312h8v8h-8zM1456 416h8v8h-8zM1320 432h8v8h-8z"/><path fill="#dedede" d="M1440 208h8v8h-8zM1512 208h8v8h-8zM1312 256h8v8h-8zM1336 256h8v8h-8zM1264 280h8v8h-8zM1280 280h8v8h-8zM1288 280h8v8h-8zM1376 280h8v8h-8zM1536 280h8v8h-8zM1312 352h8v8h-8zM1432 352h8v8h-8zM1472 352h8v8h-8zM1528 352h8v8h-8zM1448 376h8v8h-8zM1312 400h8v8h-8zM1368 448h8v8h-8zM1384 448h8v8h-8zM1408 448h8v8h-8zM1464 448h8v8h-8z"/><path fill="#dbdbdb" d="M1528 208h8v8h-8zM1480 232h8v8h-8zM1264 256h8v8h-8zM1320 256h8v8h-8zM1344 256h8v8h-8zM1360 256h8v8h-8zM1264 272h8v8h-8zM1272 280h8v8h-8zM1424 280h8v8h-8zM1432 280h8v8h-8zM1488 280h8v8h-8zM1384 304h8v8h-8zM1288 328h8v8h-8zM1304 328h8v8h-8zM1328 328h8v8h-8zM1336 328h8v8h-8zM1376 328h8v8h-8zM1384 328h8v8h-8zM1400 336h8v8h-8zM1272 352h8v8h-8zM1280 352h8v8h-8zM1304 352h8v8h-8zM1416 352h8v8h-8zM1456 352h8v8h-8zM1464 352h8v8h-8zM1504 352h8v8h-8zM1304 376h8v8h-8zM1408 376h8v8h-8zM1432 376h8v8h-8zM1480 376h8v8h-8zM1536 376h8v8h-8zM1384 384h8v8h-8zM1264 400h8v8h-8zM1320 400h8v8h-8zM1392 400h8v8h-8zM1264 416h8v8h-8zM1312 424h8v8h-8zM1528 424h8v8h-8zM1344 448h8v8h-8zM1400 448h8v8h-8zM1440 448h8v8h-8zM1480 448h8v8h-8zM1488 448h8v8h-8zM1520 448h8v8h-8zM1536 448h8v8h-8zM1200 928h8v8h-8zM1448 928h8v8h-8zM1464 928h8v8h-8z"/><path fill="#8a8a8a" d="M1328 216h8v8h-8zM1344 224h8v8h-8zM1448 224h8v8h-8zM1496 240h8v8h-8zM1336 312h8v8h-8zM1312 344h8v8h-8zM1288 376h8v8h-8zM1336 384h8v8h-8zM1344 408h8v8h-8zM1392 408h8v8h-8zM1368 432h8v8h-8zM1448 432h8v8h-8z"/><path fill="#787878" d="M1424 216h8v8h-8zM1336 240h8v8h-8zM1272 408h8v8h-8z"/><path fill="#e4e4e4" d="M1352 256h8v8h-8zM1400 272h8v8h-8zM1368 280h8v8h-8zM1512 280h8v8h-8zM1520 280h8v8h-8zM1360 328h8v8h-8zM1336 344h8v8h-8zM1296 352h8v8h-8zM1376 352h8v8h-8zM1424 352h8v8h-8zM1480 352h8v8h-8zM1496 352h8v8h-8zM1424 376h8v8h-8zM1496 376h8v8h-8zM1504 376h8v8h-8zM1384 400h8v8h-8zM1496 424h8v8h-8zM1288 448h8v8h-8zM1304 448h8v8h-8zM1312 448h8v8h-8zM1328 448h8v8h-8zM1416 448h8v8h-8zM1456 448h8v8h-8z"/><path fill="#757575" d="M1424 432h8v8h-8zM1296 440h8v8h-8zM1376 440h8v8h-8z"/></svg>
</body></html>
